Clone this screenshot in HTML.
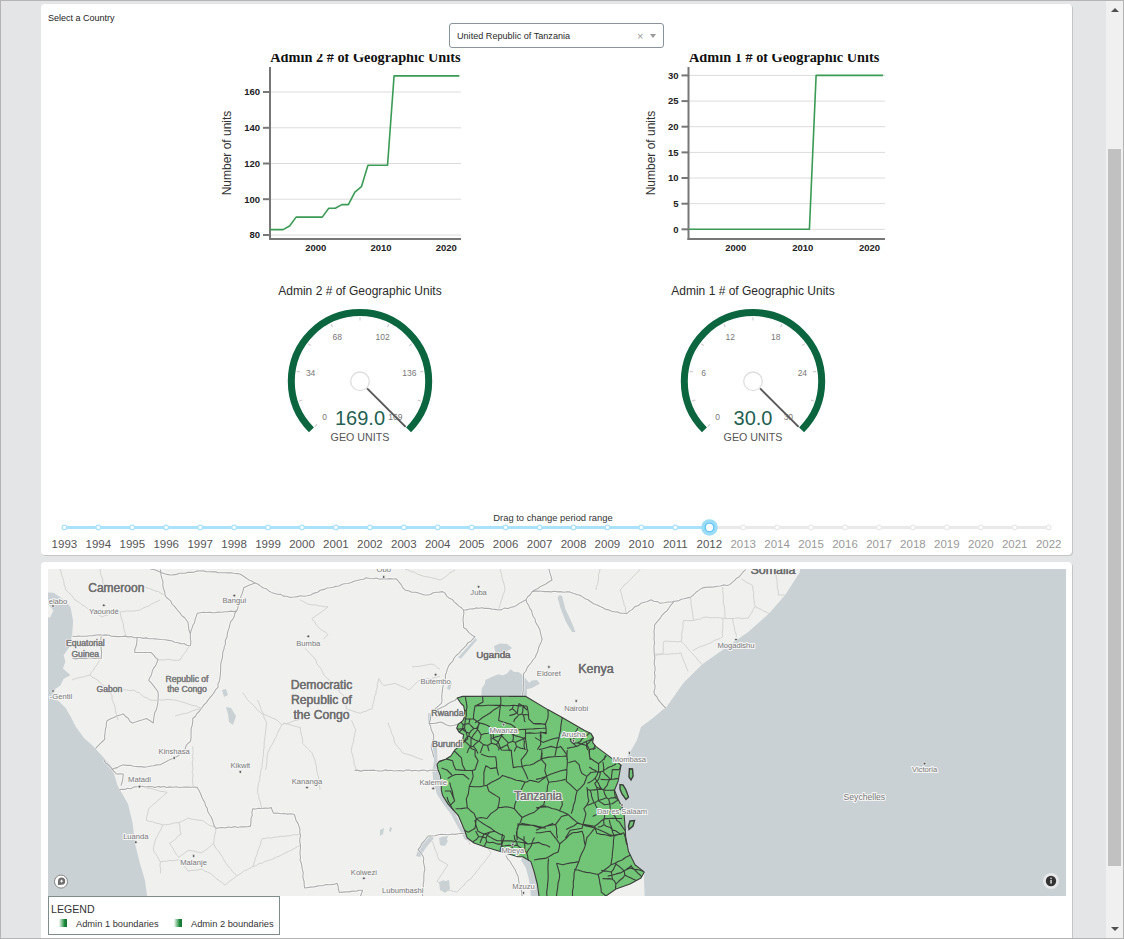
<!DOCTYPE html>
<html><head><meta charset="utf-8">
<style>
html,body{margin:0;padding:0;}
body{width:1124px;height:939px;overflow:hidden;position:relative;background:#e4e5e7;font-family:"Liberation Sans",sans-serif;}
.frame{position:absolute;z-index:10;pointer-events:none;left:0;top:0;width:1122px;height:937px;border:1px solid #b4b4b4;}
.card{position:absolute;background:#fff;border-radius:4px;box-shadow:1px 1px 0 #c4c5c7;}
.abs{position:absolute;white-space:nowrap;}
.sb{position:absolute;left:1106px;top:1px;width:17px;height:937px;background:#f0f0f0;}
svg text{font-family:"Liberation Sans",sans-serif;}
</style></head>
<body>
<div class="card" style="left:41px;top:4px;width:1031px;height:551px;"></div>
<div class="card" style="left:41px;top:562px;width:1031px;height:400px;"></div>
<div class="sb">
  <div style="position:absolute;left:2px;top:148px;width:13px;height:717px;background:#c1c1c1;"></div>
  <div style="position:absolute;left:4.5px;top:7px;width:0;height:0;border-left:4px solid transparent;border-right:4px solid transparent;border-bottom:4px solid #505050;"></div>
  <div style="position:absolute;left:4.5px;top:926px;width:0;height:0;border-left:4px solid transparent;border-right:4px solid transparent;border-top:4px solid #505050;"></div>
</div>

<div class="abs" style="left:48px;top:12.5px;font-size:9px;color:#222;">Select a Country</div>

<!-- select -->
<div class="abs" style="left:449px;top:23px;width:212.5px;height:23px;border:1px solid #88939a;border-radius:3px;background:#fff;"></div>
<div class="abs" style="left:457px;top:30.5px;font-size:9.1px;color:#2a2a2a;">United Republic of Tanzania</div>
<div class="abs" style="left:637px;top:30px;font-size:11px;color:#999;">×</div>
<div class="abs" style="left:650px;top:34px;width:0;height:0;border-left:3px solid transparent;border-right:3px solid transparent;border-top:4px solid #999;"></div>

<svg style="position:absolute;left:0;top:0" width="1124" height="939">
<clipPath id="c1"><rect x="210" y="54" width="300" height="400"/></clipPath>
<g clip-path="url(#c1)"><text x="270.3" y="61.7" style="font-family:Liberation Serif" font-weight="bold" font-size="14.3" fill="#111">Admin 2 # of Geographic Units</text></g>
<line x1="270" y1="92.0" x2="461" y2="92.0" stroke="#dcdcdc" stroke-width="1"/>
<line x1="263" y1="92.0" x2="270" y2="92.0" stroke="#777" stroke-width="2"/>
<text x="260" y="95.3" text-anchor="end" font-size="9.5" font-weight="bold" fill="#222">160</text>
<line x1="270" y1="127.8" x2="461" y2="127.8" stroke="#dcdcdc" stroke-width="1"/>
<line x1="263" y1="127.8" x2="270" y2="127.8" stroke="#777" stroke-width="2"/>
<text x="260" y="131.1" text-anchor="end" font-size="9.5" font-weight="bold" fill="#222">140</text>
<line x1="270" y1="163.5" x2="461" y2="163.5" stroke="#dcdcdc" stroke-width="1"/>
<line x1="263" y1="163.5" x2="270" y2="163.5" stroke="#777" stroke-width="2"/>
<text x="260" y="166.8" text-anchor="end" font-size="9.5" font-weight="bold" fill="#222">120</text>
<line x1="270" y1="199.2" x2="461" y2="199.2" stroke="#dcdcdc" stroke-width="1"/>
<line x1="263" y1="199.2" x2="270" y2="199.2" stroke="#777" stroke-width="2"/>
<text x="260" y="202.6" text-anchor="end" font-size="9.5" font-weight="bold" fill="#222">100</text>
<line x1="270" y1="235.0" x2="461" y2="235.0" stroke="#dcdcdc" stroke-width="1"/>
<line x1="263" y1="235.0" x2="270" y2="235.0" stroke="#777" stroke-width="2"/>
<text x="260" y="238.3" text-anchor="end" font-size="9.5" font-weight="bold" fill="#222">80</text>
<text x="315.7" y="251" text-anchor="middle" font-size="9.5" font-weight="bold" fill="#222">2000</text>
<text x="381.0" y="251" text-anchor="middle" font-size="9.5" font-weight="bold" fill="#222">2010</text>
<text x="446.3" y="251" text-anchor="middle" font-size="9.5" font-weight="bold" fill="#222">2020</text>
<line x1="270" y1="67" x2="270" y2="240" stroke="#777" stroke-width="2"/>
<line x1="269" y1="239" x2="461" y2="239" stroke="#777" stroke-width="2"/>
<polyline points="270.00,229.64 276.53,229.64 283.06,229.64 289.59,226.06 296.12,217.12 302.65,217.12 309.18,217.12 315.71,217.12 322.24,217.12 328.77,208.19 335.30,208.19 341.83,204.61 348.36,204.61 354.89,192.10 361.42,186.74 367.95,165.29 374.48,165.29 381.01,165.29 387.54,165.29 394.07,75.91 400.60,75.91 407.13,75.91 413.66,75.91 420.19,75.91 426.72,75.91 433.25,75.91 439.78,75.91 446.31,75.91 452.84,75.91 459.37,75.91" fill="none" stroke="#3b9b55" stroke-width="1.6" stroke-linejoin="round"/>
<text transform="translate(231,153) rotate(-90)" text-anchor="middle" font-size="12" fill="#333">Number of units</text>
<clipPath id="c2"><rect x="628.5" y="54" width="300" height="400"/></clipPath>
<g clip-path="url(#c2)"><text x="689" y="61.7" style="font-family:Liberation Serif" font-weight="bold" font-size="14.3" fill="#111">Admin 1 # of Geographic Units</text></g>
<line x1="688.5" y1="75.4" x2="885" y2="75.4" stroke="#dcdcdc" stroke-width="1"/>
<line x1="681.5" y1="75.4" x2="688.5" y2="75.4" stroke="#777" stroke-width="2"/>
<text x="678.5" y="78.7" text-anchor="end" font-size="9.5" font-weight="bold" fill="#222">30</text>
<line x1="688.5" y1="101.1" x2="885" y2="101.1" stroke="#dcdcdc" stroke-width="1"/>
<line x1="681.5" y1="101.1" x2="688.5" y2="101.1" stroke="#777" stroke-width="2"/>
<text x="678.5" y="104.4" text-anchor="end" font-size="9.5" font-weight="bold" fill="#222">25</text>
<line x1="688.5" y1="126.7" x2="885" y2="126.7" stroke="#dcdcdc" stroke-width="1"/>
<line x1="681.5" y1="126.7" x2="688.5" y2="126.7" stroke="#777" stroke-width="2"/>
<text x="678.5" y="130.0" text-anchor="end" font-size="9.5" font-weight="bold" fill="#222">20</text>
<line x1="688.5" y1="152.4" x2="885" y2="152.4" stroke="#dcdcdc" stroke-width="1"/>
<line x1="681.5" y1="152.4" x2="688.5" y2="152.4" stroke="#777" stroke-width="2"/>
<text x="678.5" y="155.7" text-anchor="end" font-size="9.5" font-weight="bold" fill="#222">15</text>
<line x1="688.5" y1="178.0" x2="885" y2="178.0" stroke="#dcdcdc" stroke-width="1"/>
<line x1="681.5" y1="178.0" x2="688.5" y2="178.0" stroke="#777" stroke-width="2"/>
<text x="678.5" y="181.3" text-anchor="end" font-size="9.5" font-weight="bold" fill="#222">10</text>
<line x1="688.5" y1="203.7" x2="885" y2="203.7" stroke="#dcdcdc" stroke-width="1"/>
<line x1="681.5" y1="203.7" x2="688.5" y2="203.7" stroke="#777" stroke-width="2"/>
<text x="678.5" y="207.0" text-anchor="end" font-size="9.5" font-weight="bold" fill="#222">5</text>
<line x1="688.5" y1="229.3" x2="885" y2="229.3" stroke="#dcdcdc" stroke-width="1"/>
<line x1="681.5" y1="229.3" x2="688.5" y2="229.3" stroke="#777" stroke-width="2"/>
<text x="678.5" y="232.6" text-anchor="end" font-size="9.5" font-weight="bold" fill="#222">0</text>
<text x="735.8" y="251" text-anchor="middle" font-size="9.5" font-weight="bold" fill="#222">2000</text>
<text x="802.7" y="251" text-anchor="middle" font-size="9.5" font-weight="bold" fill="#222">2010</text>
<text x="869.6" y="251" text-anchor="middle" font-size="9.5" font-weight="bold" fill="#222">2020</text>
<line x1="688.5" y1="67" x2="688.5" y2="240" stroke="#777" stroke-width="2"/>
<line x1="687.5" y1="239" x2="885" y2="239" stroke="#777" stroke-width="2"/>
<polyline points="689.00,229.30 695.69,229.30 702.38,229.30 709.07,229.30 715.76,229.30 722.45,229.30 729.14,229.30 735.83,229.30 742.52,229.30 749.21,229.30 755.90,229.30 762.59,229.30 769.28,229.30 775.97,229.30 782.66,229.30 789.35,229.30 796.04,229.30 802.73,229.30 809.42,229.30 816.11,75.40 822.80,75.40 829.49,75.40 836.18,75.40 842.87,75.40 849.56,75.40 856.25,75.40 862.94,75.40 869.63,75.40 876.32,75.40 883.01,75.40" fill="none" stroke="#3b9b55" stroke-width="1.6" stroke-linejoin="round"/>
<text transform="translate(655,153) rotate(-90)" text-anchor="middle" font-size="12" fill="#333">Number of units</text>
<text x="360" y="294.5" text-anchor="middle" font-size="12" fill="#2a2a2a">Admin 2 # of Geographic Units</text>
<path d="M311.42,429.88 A68.7,68.7 0 1 1 408.58,429.88" fill="none" stroke="#0b6640" stroke-width="7"/>
<line x1="317.08" y1="424.22" x2="314.75" y2="426.55" stroke="#cfcfcf" stroke-width="1.2"/>
<line x1="302.27" y1="400.06" x2="299.13" y2="401.08" stroke="#cfcfcf" stroke-width="1.2"/>
<line x1="300.05" y1="371.80" x2="296.79" y2="371.29" stroke="#cfcfcf" stroke-width="1.2"/>
<line x1="310.89" y1="345.62" x2="308.22" y2="343.68" stroke="#cfcfcf" stroke-width="1.2"/>
<line x1="332.44" y1="327.22" x2="330.94" y2="324.28" stroke="#cfcfcf" stroke-width="1.2"/>
<line x1="360.00" y1="320.60" x2="360.00" y2="317.30" stroke="#cfcfcf" stroke-width="1.2"/>
<line x1="387.56" y1="327.22" x2="389.06" y2="324.28" stroke="#cfcfcf" stroke-width="1.2"/>
<line x1="409.11" y1="345.62" x2="411.78" y2="343.68" stroke="#cfcfcf" stroke-width="1.2"/>
<line x1="419.95" y1="371.80" x2="423.21" y2="371.29" stroke="#cfcfcf" stroke-width="1.2"/>
<line x1="417.73" y1="400.06" x2="420.87" y2="401.08" stroke="#cfcfcf" stroke-width="1.2"/>
<line x1="402.92" y1="424.22" x2="405.25" y2="426.55" stroke="#cfcfcf" stroke-width="1.2"/>
<text x="324.64" y="419.66" text-anchor="middle" font-size="8.5" fill="#777">0</text>
<text x="310.62" y="376.48" text-anchor="middle" font-size="8.5" fill="#777">34</text>
<text x="337.30" y="339.75" text-anchor="middle" font-size="8.5" fill="#777">68</text>
<text x="382.70" y="339.75" text-anchor="middle" font-size="8.5" fill="#777">102</text>
<text x="409.38" y="376.48" text-anchor="middle" font-size="8.5" fill="#777">136</text>
<text x="395.36" y="419.66" text-anchor="middle" font-size="8.5" fill="#777">169</text>
<line x1="367.07" y1="388.37" x2="405.61" y2="426.91" stroke="#5a5a5a" stroke-width="2"/>
<circle cx="360" cy="381.3" r="9.3" fill="#fff" stroke="#dedede" stroke-width="1.3"/>
<text x="360" y="425" text-anchor="middle" font-size="20" fill="#245f52">169.0</text>
<text x="360" y="441" text-anchor="middle" font-size="10.7" fill="#555">GEO UNITS</text>
<text x="753" y="294.5" text-anchor="middle" font-size="12" fill="#2a2a2a">Admin 1 # of Geographic Units</text>
<path d="M704.42,429.88 A68.7,68.7 0 1 1 801.58,429.88" fill="none" stroke="#0b6640" stroke-width="7"/>
<line x1="710.08" y1="424.22" x2="707.75" y2="426.55" stroke="#cfcfcf" stroke-width="1.2"/>
<line x1="695.27" y1="400.06" x2="692.13" y2="401.08" stroke="#cfcfcf" stroke-width="1.2"/>
<line x1="693.05" y1="371.80" x2="689.79" y2="371.29" stroke="#cfcfcf" stroke-width="1.2"/>
<line x1="703.89" y1="345.62" x2="701.22" y2="343.68" stroke="#cfcfcf" stroke-width="1.2"/>
<line x1="725.44" y1="327.22" x2="723.94" y2="324.28" stroke="#cfcfcf" stroke-width="1.2"/>
<line x1="753.00" y1="320.60" x2="753.00" y2="317.30" stroke="#cfcfcf" stroke-width="1.2"/>
<line x1="780.56" y1="327.22" x2="782.06" y2="324.28" stroke="#cfcfcf" stroke-width="1.2"/>
<line x1="802.11" y1="345.62" x2="804.78" y2="343.68" stroke="#cfcfcf" stroke-width="1.2"/>
<line x1="812.95" y1="371.80" x2="816.21" y2="371.29" stroke="#cfcfcf" stroke-width="1.2"/>
<line x1="810.73" y1="400.06" x2="813.87" y2="401.08" stroke="#cfcfcf" stroke-width="1.2"/>
<line x1="795.92" y1="424.22" x2="798.25" y2="426.55" stroke="#cfcfcf" stroke-width="1.2"/>
<text x="717.64" y="419.66" text-anchor="middle" font-size="8.5" fill="#777">0</text>
<text x="703.62" y="376.48" text-anchor="middle" font-size="8.5" fill="#777">6</text>
<text x="730.30" y="339.75" text-anchor="middle" font-size="8.5" fill="#777">12</text>
<text x="775.70" y="339.75" text-anchor="middle" font-size="8.5" fill="#777">18</text>
<text x="802.38" y="376.48" text-anchor="middle" font-size="8.5" fill="#777">24</text>
<text x="788.36" y="419.66" text-anchor="middle" font-size="8.5" fill="#777">30</text>
<line x1="760.07" y1="388.37" x2="798.61" y2="426.91" stroke="#5a5a5a" stroke-width="2"/>
<circle cx="753" cy="381.3" r="9.3" fill="#fff" stroke="#dedede" stroke-width="1.3"/>
<text x="753" y="425" text-anchor="middle" font-size="20" fill="#245f52">30.0</text>
<text x="753" y="441" text-anchor="middle" font-size="10.7" fill="#555">GEO UNITS</text>
<text x="553" y="520.5" text-anchor="middle" font-size="9.4" fill="#333">Drag to change period range</text>
<rect x="64.4" y="526" width="984.3" height="3" rx="1.5" fill="#e9e9e9"/>
<rect x="64.4" y="526" width="644.9" height="3" fill="#abe2fb"/>
<circle cx="64.4" cy="527.4" r="2.3" fill="#fff" stroke="#abe2fb" stroke-width="1.2"/>
<text x="64.4" y="548" text-anchor="middle" font-size="11.5" fill="#555">1993</text>
<circle cx="98.3" cy="527.4" r="2.3" fill="#fff" stroke="#abe2fb" stroke-width="1.2"/>
<text x="98.3" y="548" text-anchor="middle" font-size="11.5" fill="#555">1994</text>
<circle cx="132.3" cy="527.4" r="2.3" fill="#fff" stroke="#abe2fb" stroke-width="1.2"/>
<text x="132.3" y="548" text-anchor="middle" font-size="11.5" fill="#555">1995</text>
<circle cx="166.2" cy="527.4" r="2.3" fill="#fff" stroke="#abe2fb" stroke-width="1.2"/>
<text x="166.2" y="548" text-anchor="middle" font-size="11.5" fill="#555">1996</text>
<circle cx="200.2" cy="527.4" r="2.3" fill="#fff" stroke="#abe2fb" stroke-width="1.2"/>
<text x="200.2" y="548" text-anchor="middle" font-size="11.5" fill="#555">1997</text>
<circle cx="234.1" cy="527.4" r="2.3" fill="#fff" stroke="#abe2fb" stroke-width="1.2"/>
<text x="234.1" y="548" text-anchor="middle" font-size="11.5" fill="#555">1998</text>
<circle cx="268.0" cy="527.4" r="2.3" fill="#fff" stroke="#abe2fb" stroke-width="1.2"/>
<text x="268.0" y="548" text-anchor="middle" font-size="11.5" fill="#555">1999</text>
<circle cx="302.0" cy="527.4" r="2.3" fill="#fff" stroke="#abe2fb" stroke-width="1.2"/>
<text x="302.0" y="548" text-anchor="middle" font-size="11.5" fill="#555">2000</text>
<circle cx="335.9" cy="527.4" r="2.3" fill="#fff" stroke="#abe2fb" stroke-width="1.2"/>
<text x="335.9" y="548" text-anchor="middle" font-size="11.5" fill="#555">2001</text>
<circle cx="369.9" cy="527.4" r="2.3" fill="#fff" stroke="#abe2fb" stroke-width="1.2"/>
<text x="369.9" y="548" text-anchor="middle" font-size="11.5" fill="#555">2002</text>
<circle cx="403.8" cy="527.4" r="2.3" fill="#fff" stroke="#abe2fb" stroke-width="1.2"/>
<text x="403.8" y="548" text-anchor="middle" font-size="11.5" fill="#555">2003</text>
<circle cx="437.7" cy="527.4" r="2.3" fill="#fff" stroke="#abe2fb" stroke-width="1.2"/>
<text x="437.7" y="548" text-anchor="middle" font-size="11.5" fill="#555">2004</text>
<circle cx="471.7" cy="527.4" r="2.3" fill="#fff" stroke="#abe2fb" stroke-width="1.2"/>
<text x="471.7" y="548" text-anchor="middle" font-size="11.5" fill="#555">2005</text>
<circle cx="505.6" cy="527.4" r="2.3" fill="#fff" stroke="#abe2fb" stroke-width="1.2"/>
<text x="505.6" y="548" text-anchor="middle" font-size="11.5" fill="#555">2006</text>
<circle cx="539.6" cy="527.4" r="2.3" fill="#fff" stroke="#abe2fb" stroke-width="1.2"/>
<text x="539.6" y="548" text-anchor="middle" font-size="11.5" fill="#555">2007</text>
<circle cx="573.5" cy="527.4" r="2.3" fill="#fff" stroke="#abe2fb" stroke-width="1.2"/>
<text x="573.5" y="548" text-anchor="middle" font-size="11.5" fill="#555">2008</text>
<circle cx="607.4" cy="527.4" r="2.3" fill="#fff" stroke="#abe2fb" stroke-width="1.2"/>
<text x="607.4" y="548" text-anchor="middle" font-size="11.5" fill="#555">2009</text>
<circle cx="641.4" cy="527.4" r="2.3" fill="#fff" stroke="#abe2fb" stroke-width="1.2"/>
<text x="641.4" y="548" text-anchor="middle" font-size="11.5" fill="#555">2010</text>
<circle cx="675.3" cy="527.4" r="2.3" fill="#fff" stroke="#abe2fb" stroke-width="1.2"/>
<text x="675.3" y="548" text-anchor="middle" font-size="11.5" fill="#555">2011</text>
<text x="709.3" y="548" text-anchor="middle" font-size="11.5" fill="#555">2012</text>
<circle cx="743.2" cy="527.4" r="2.3" fill="#fff" stroke="#e9e9e9" stroke-width="1.2"/>
<text x="743.2" y="548" text-anchor="middle" font-size="11.5" fill="#999">2013</text>
<circle cx="777.1" cy="527.4" r="2.3" fill="#fff" stroke="#e9e9e9" stroke-width="1.2"/>
<text x="777.1" y="548" text-anchor="middle" font-size="11.5" fill="#999">2014</text>
<circle cx="811.1" cy="527.4" r="2.3" fill="#fff" stroke="#e9e9e9" stroke-width="1.2"/>
<text x="811.1" y="548" text-anchor="middle" font-size="11.5" fill="#999">2015</text>
<circle cx="845.0" cy="527.4" r="2.3" fill="#fff" stroke="#e9e9e9" stroke-width="1.2"/>
<text x="845.0" y="548" text-anchor="middle" font-size="11.5" fill="#999">2016</text>
<circle cx="879.0" cy="527.4" r="2.3" fill="#fff" stroke="#e9e9e9" stroke-width="1.2"/>
<text x="879.0" y="548" text-anchor="middle" font-size="11.5" fill="#999">2017</text>
<circle cx="912.9" cy="527.4" r="2.3" fill="#fff" stroke="#e9e9e9" stroke-width="1.2"/>
<text x="912.9" y="548" text-anchor="middle" font-size="11.5" fill="#999">2018</text>
<circle cx="946.8" cy="527.4" r="2.3" fill="#fff" stroke="#e9e9e9" stroke-width="1.2"/>
<text x="946.8" y="548" text-anchor="middle" font-size="11.5" fill="#999">2019</text>
<circle cx="980.8" cy="527.4" r="2.3" fill="#fff" stroke="#e9e9e9" stroke-width="1.2"/>
<text x="980.8" y="548" text-anchor="middle" font-size="11.5" fill="#999">2020</text>
<circle cx="1014.7" cy="527.4" r="2.3" fill="#fff" stroke="#e9e9e9" stroke-width="1.2"/>
<text x="1014.7" y="548" text-anchor="middle" font-size="11.5" fill="#999">2021</text>
<circle cx="1048.7" cy="527.4" r="2.3" fill="#fff" stroke="#e9e9e9" stroke-width="1.2"/>
<text x="1048.7" y="548" text-anchor="middle" font-size="11.5" fill="#999">2022</text>
<circle cx="709.5" cy="527.4" r="6.5" fill="#fff" stroke="#9bdcf8" stroke-width="3.5"/>
<circle cx="709.5" cy="527.4" r="4.3" fill="#fff" stroke="#61c5f5" stroke-width="1.4"/>
</svg>

<svg style="position:absolute;left:0;top:0" width="1124" height="939">
<defs><clipPath id="mapclip"><rect x="48" y="569" width="1018" height="327"/></clipPath></defs>
<g clip-path="url(#mapclip)">
<rect x="48" y="569" width="1018" height="327" fill="#f0f0ee"/>
<polygon points="40.0,560.0 40.0,592.0 53.5,592.8 65.4,600.4 70.5,607.2 73.1,620.9 72.2,634.5 68.8,648.1 63.7,654.9 65.4,661.7 62.9,668.5 70.5,675.3 63.7,678.7 60.3,685.5 55.2,688.9 53.5,692.3 51.8,699.1 58.6,700.9 65.4,707.7 70.5,716.2 75.6,726.4 84.1,738.3 93.0,746.0 103.0,757.0 112.0,767.0 117.5,785.6 128.0,804.0 132.5,822.6 135.0,843.4 139.5,862.0 145.0,880.4 147.0,895.5 147.0,905.0 40.0,905.0" fill="#c9d1d4"/>
<polygon points="40,603 48,603.8 53.5,610.6 50.1,617.4 40,617" fill="#f0f0ee"/>
<polygon points="800.0,560.0 800.0,572.0 785.2,595.0 769.0,613.6 748.2,632.0 725.0,648.3 702.0,664.5 683.4,683.0 667.2,706.0 653.3,717.7 641.0,727.0 637.0,740.0 628.0,756.0 621.9,764.0 621.0,765.0 618.2,780.9 614.5,790.2 618.2,799.5 623.8,810.7 624.7,821.9 625.7,836.8 628.5,851.6 635.0,864.7 644.3,872.1 644.0,880.0 645.0,905.0 1070.0,905.0 1070.0,560.0" fill="#c9d1d4"/>
<polygon points="481.4,697.0 481.7,688.5 485.0,683.5 485.3,679.9 489.9,677.8 498.5,674.2 502.7,675.6 507.0,673.5 510.6,669.2 514.1,672.1 518.4,672.1 522.7,674.9 526.2,679.2 529.1,682.8 531.9,680.6 536.9,679.9 539.8,683.5 532.6,687.7 526.9,689.2 526.9,697.0" fill="#c9d1d4"/>
<polygon points="475.5,638.0 477.0,640.0 461.0,658.5 458.0,657.5" fill="#c9d1d4"/>
<polygon points="494.0,646.0 500.0,643.6 507.0,644.0 512.0,648.0 506.0,652.0 500.0,655.0 495.0,651.0" fill="#c9d1d4"/>
<polygon points="449.0,681.0 452.0,682.0 450.0,690.0 447.0,689.0" fill="#c9d1d4"/>
<polygon points="428.0,713.0 431.0,714.0 430.5,724.0 428.0,723.0" fill="#c9d1d4"/>
<polygon points="559.7,595.0 562.0,596.0 565.4,609.0 572.4,624.0 575.5,632.0 572.0,632.0 566.0,622.0 560.8,609.0 557.5,597.4" fill="#c9d1d4"/>
<polygon points="433.0,747.7 437.0,748.0 437.5,762.4 436.8,768.1 440.0,778.3 442.0,793.7 448.3,803.9 454.7,811.6 459.8,823.0 465.0,832.0 467.5,837.1 470.0,841.0 465.0,839.7 458.6,828.2 450.9,814.1 443.2,803.9 436.8,793.7 433.5,782.0 432.4,772.0 434.0,760.0" fill="#c9d1d4"/>
<polygon points="430.0,836.0 434.0,838.0 425.0,849.0 420.0,857.0 416.0,856.0 419.0,847.0" fill="#c9d1d4"/>
<polygon points="441.0,837.0 448.0,836.0 446.0,842.0 441.0,846.0" fill="#c9d1d4"/>
<polygon points="439.0,882.0 444.0,880.0 447.0,887.0 444.0,892.0 440.0,890.0" fill="#c9d1d4"/>
<polygon points="522.8,856.8 530.9,860.0 534.0,871.2 537.3,884.0 538.9,896.0 530.9,896.0 529.3,880.9 526.0,868.0 521.0,860.0" fill="#c9d1d4"/>
<polygon points="226.0,707.0 231.0,708.0 236.0,716.0 233.0,725.0 229.0,722.0 228.0,714.0" fill="#c9d1d4"/>
<polygon points="222.0,690.0 226.0,689.0 228.0,695.0 224.0,697.0" fill="#c9d1d4"/>
<polygon points="439.0,838.0 444.0,837.0 448.0,841.0 445.0,846.0 440.0,845.0" fill="#c9d1d4"/>
<polygon points="442.0,882.0 449.0,880.0 450.0,889.0 445.0,893.0 441.0,889.0" fill="#c9d1d4"/>
<polygon points="380.0,830.0 384.0,828.0 383.0,834.0 380.0,836.0" fill="#c9d1d4"/>
<polygon points="390.0,827.0 392.0,828.0 391.0,832.0 389.0,831.0" fill="#c9d1d4"/>
<polyline points="271.3,592.4 274.1,593.3 277.4,594.2 280.8,594.4 283.2,596.1 286.6,596.2 290.0,597.4 294.1,597.0 297.3,596.6 300.6,595.8 304.0,596.2 307.4,595.7 310.8,595.0 314.2,593.1 317.6,592.3 320.3,590.2 324.2,589.4 327.0,588.0 330.2,587.8 333.2,587.2 335.8,586.4 338.8,586.0 342.3,584.3 344.4,583.8 347.8,583.5 351.4,582.5 354.1,581.3 357.1,580.5 360.0,579.7 363.3,579.2 366.3,577.7 369.8,578.5 373.2,578.8 376.2,578.0 379.7,579.2 382.5,578.9 386.5,579.0 389.7,578.6 393.3,579.0 396.4,578.9 398.5,581.3 401.5,585.2 402.9,587.9 405.7,590.4 408.7,590.7 411.6,592.3 415.4,592.2 418.2,592.9 421.4,594.0 424.2,595.0 427.7,595.0 430.4,594.5 433.2,592.8 436.7,592.2 439.3,592.1 442.7,591.6 445.1,593.2 446.8,596.1 449.4,598.3 452.4,599.6 454.2,601.8 456.7,604.0 458.9,606.1 461.7,608.0 463.5,610.0 466.5,609.9 469.4,609.0 473.3,608.9 475.9,607.9 478.8,608.3 482.0,607.8 484.7,608.4 488.6,608.2 491.9,609.1 495.2,609.4 498.2,610.0 501.7,609.6 504.1,608.1 508.1,608.5 510.9,607.2 514.4,606.6 517.4,604.7 520.0,602.9 522.9,601.5 526.0,599.7" fill="none" stroke="#ffffff" stroke-width="2.6" stroke-opacity="0.6" stroke-linejoin="round"/>
<polyline points="271.3,592.4 268.4,590.7 266.2,588.7 263.3,588.0 260.3,585.9 258.2,584.3 255.1,583.1 251.8,584.2 249.6,585.0 246.3,586.4 243.6,587.8 243.1,590.6 242.3,593.2 240.8,596.6 240.6,599.3 238.9,601.8 238.4,604.8 237.8,608.4 236.6,610.9 234.8,613.4 234.2,616.6 232.8,619.1 230.6,621.8 229.7,624.8 229.3,627.6 228.0,630.9 227.3,633.9 227.1,636.7 225.2,640.7 225.5,643.9 224.2,646.9 224.0,649.1 222.7,652.5 222.6,656.1 222.1,658.8 221.2,661.8 220.7,664.6 220.7,668.0 220.6,670.9 220.3,674.8 219.9,678.2 219.4,681.0 217.9,684.3 218.1,687.2 215.7,689.6 214.2,692.4 211.9,695.5 210.1,697.4 207.7,700.6 205.9,703.1 203.7,705.0 201.9,708.0 199.6,711.0 196.9,713.6 195.5,716.2 192.7,718.5 192.8,721.2 192.2,725.5 191.2,728.1 191.1,731.7 191.0,735.0 191.1,737.7 190.4,741.6 187.9,743.5 186.1,745.7 185.2,749.0 182.2,750.9 180.5,753.0 178.8,755.5 175.5,757.2 172.7,758.4 169.2,759.9 166.0,761.8 163.6,763.1 160.3,764.8 156.6,764.9 153.7,765.8 150.9,766.0 147.7,766.8 144.1,767.1 140.6,766.6 137.2,766.6 133.6,766.2 130.2,765.3 126.8,765.4 123.3,764.8 119.9,765.9 117.4,767.6 115.1,768.1 111.7,769.4" fill="none" stroke="#ffffff" stroke-width="2.6" stroke-opacity="0.6" stroke-linejoin="round"/>
<polyline points="72.4,636.3 75.9,636.5 78.1,636.0 81.0,636.3 84.6,636.3 87.8,636.0 90.7,635.7 93.0,635.6 95.9,635.0 99.8,634.8 102.5,635.2 105.2,634.9 109.3,635.2 111.4,636.2 114.7,636.4 118.5,636.6 122.0,636.5 124.9,636.1 128.1,636.9 131.1,636.6 134.3,637.8 137.2,637.5 139.8,637.5 143.4,638.4 146.1,637.9 149.2,638.7 152.9,638.7 155.5,638.9 158.6,639.2 161.3,639.5 164.9,639.8 168.7,640.4 171.6,640.8 174.7,642.3 177.9,642.7 180.8,643.6 184.5,643.7 186.7,645.2 190.4,645.6 190.9,641.8 190.3,638.1 190.4,634.0 191.0,630.7 192.0,628.2 193.1,624.8 194.6,622.7 195.1,619.4 196.2,616.6 197.3,613.2 200.4,612.7 203.0,612.3 206.3,612.5 209.0,612.3 212.2,612.6 215.0,612.7 218.4,612.1 221.4,612.2 224.9,611.7 227.5,611.7 231.0,611.1 233.9,611.6 236.6,610.9" fill="none" stroke="#ffffff" stroke-width="2.6" stroke-opacity="0.6" stroke-linejoin="round"/>
<polyline points="160.3,569.3 160.8,572.2 161.1,575.9 162.2,579.4 163.0,581.7 162.8,584.9 163.4,588.6 164.8,592.0 164.9,594.7 166.5,597.5 168.5,599.2 170.9,601.2 172.1,604.4 174.3,606.1 176.5,608.8 177.8,610.7 180.2,613.2 181.9,615.7 184.7,617.7 186.1,619.7 188.0,622.5 188.5,626.5 189.1,630.6 190.4,634.0" fill="none" stroke="#ffffff" stroke-width="2.6" stroke-opacity="0.6" stroke-linejoin="round"/>
<polyline points="150.0,569.0 153.8,569.5 157.2,570.8 160.3,572.3 163.1,573.2 166.9,574.4 170.0,575.0 172.7,574.9 176.6,574.4 179.0,573.3 182.0,573.2 185.3,573.2 188.1,572.2 191.2,572.4 193.6,572.3 197.2,570.9 200.0,571.0 203.6,570.8 206.0,571.7 209.3,571.8 212.5,571.9 215.2,571.8 217.9,572.6 221.8,572.7 224.9,572.7 227.4,572.9 231.2,572.8 233.9,573.2 237.2,573.6 240.0,574.0 242.8,575.7 246.1,578.0 248.9,579.9 251.6,581.0 255.1,583.1" fill="none" stroke="#ffffff" stroke-width="2.6" stroke-opacity="0.6" stroke-linejoin="round"/>
<polyline points="101.3,636.3 100.8,639.0 101.6,642.9 100.9,645.4 101.2,649.2 101.7,652.3 101.4,654.7 101.3,658.3 98.0,657.9 94.9,658.4 91.3,658.0 88.8,657.7 85.6,658.8 82.6,658.2 78.9,658.4 75.8,658.9 72.4,658.3" fill="none" stroke="#ffffff" stroke-width="2.6" stroke-opacity="0.6" stroke-linejoin="round"/>
<polyline points="137.2,637.5 136.9,640.3 136.7,643.5 135.9,646.8 134.7,649.8 134.8,652.5 138.2,652.5 141.3,652.5 144.2,652.5 147.2,652.5 151.0,652.5 153.5,654.8 155.7,657.7 158.0,659.5 157.1,662.0 155.7,665.6 153.5,668.2 152.4,670.9 151.4,674.9 149.8,677.8 148.7,680.3 151.3,682.8 153.8,686.2 156.2,689.3 158.0,691.9 158.3,695.8 158.0,700.0 157.7,703.8 157.1,706.5 156.3,709.8 154.8,712.6 154.1,716.1 153.6,719.7 153.3,723.0 150.1,720.8 146.4,718.5 142.8,719.8 139.2,720.7 136.3,721.8 132.5,723.0 129.8,721.2 128.2,718.3 125.4,716.2 123.3,713.9 120.2,714.9 116.2,716.3 113.9,717.6 110.2,719.1 107.0,720.8 106.3,723.5 106.2,726.6 105.3,729.6 105.1,733.1 104.6,735.6 104.8,739.3 102.4,741.5 100.4,743.4 97.7,746.2 95.5,748.6" fill="none" stroke="#ffffff" stroke-width="2.6" stroke-opacity="0.6" stroke-linejoin="round"/>
<polyline points="104.0,760.0 105.5,762.9 107.8,764.2 110.1,766.6 112.3,769.1 113.8,771.1 116.3,774.0 120.1,773.7 123.3,774.0 122.9,777.8 122.3,781.5 121.0,785.6" fill="none" stroke="#ffffff" stroke-width="2.6" stroke-opacity="0.6" stroke-linejoin="round"/>
<polyline points="118.6,790.2 121.3,789.4 124.9,789.4 127.4,788.2 130.8,788.8 133.6,787.1 136.0,786.7 139.5,786.7 142.1,786.2 145.0,787.0 149.1,786.5 152.2,786.8 155.1,787.4 158.3,786.4 160.6,787.1 164.4,786.5 166.6,787.5 169.5,786.9 172.8,787.3 176.5,786.8 179.3,787.5 182.5,787.3 185.6,787.1 188.1,787.0 191.6,787.3 194.0,787.0 197.3,787.4 199.1,790.8 200.6,793.8 201.9,797.2 203.1,799.6 204.7,802.3 205.7,806.0 207.2,808.1 207.9,811.8 209.7,814.7 211.2,817.0 212.5,820.2 213.1,822.6 214.0,825.4 215.8,828.4 219.5,827.7 222.2,827.5 224.8,828.0 228.1,827.0 231.2,827.5 234.8,826.6 237.6,827.5 240.7,826.8 244.1,826.9 247.5,826.7 250.5,826.1 251.0,822.2 251.0,818.6 252.3,815.2 251.8,812.7 252.8,808.7 255.5,809.0 258.5,808.3 261.7,808.5 265.3,808.1 268.5,808.2 271.3,807.6 272.3,810.6 273.6,813.3 277.0,813.0 280.9,813.8 284.4,813.5 287.5,814.1 291.2,813.8 294.4,814.5 295.3,817.5 296.1,820.6 298.0,823.4 299.1,826.6 300.0,829.5 299.7,832.4 300.6,835.4 299.9,838.2 299.7,841.3 300.5,845.1 300.4,848.4 300.1,851.4 300.0,853.9 300.5,857.5 300.0,860.1 301.3,863.2 301.9,866.2 302.3,869.4 303.3,873.0 302.8,876.1 303.1,878.2 304.1,881.5 304.2,885.0 304.6,887.9 307.1,887.8 310.5,887.1 313.7,887.0 317.2,886.1 319.5,885.7 323.1,885.6 326.5,884.5 329.6,884.8 333.8,884.4 337.0,883.3 338.3,886.8 338.4,889.0 339.3,892.5 342.4,892.1 346.0,891.9 349.1,891.9 352.3,891.1 356.3,891.2 358.9,890.2 362.5,890.2 361.7,893.0 360.1,897.0" fill="none" stroke="#ffffff" stroke-width="2.6" stroke-opacity="0.6" stroke-linejoin="round"/>
<polyline points="428.4,835.9 425.9,838.7 424.3,841.0 421.6,843.8 420.4,846.9 418.0,849.7 420.9,852.9 422.6,855.5 423.8,858.4 423.4,861.9 424.2,865.7 424.9,869.4 424.1,872.5 423.9,875.3 423.8,879.0 423.8,881.4 423.1,884.6 423.5,888.0 423.6,891.2 422.6,893.5 422.6,897.0" fill="none" stroke="#ffffff" stroke-width="2.6" stroke-opacity="0.6" stroke-linejoin="round"/>
<polyline points="428.4,835.9 432.0,836.0 435.1,835.7 438.4,834.8 441.3,834.2 445.0,834.5 448.5,834.8 452.1,834.0 455.1,834.4 458.6,833.8 461.5,833.4 464.9,833.2" fill="none" stroke="#ffffff" stroke-width="2.6" stroke-opacity="0.6" stroke-linejoin="round"/>
<polyline points="354.6,770.5 357.2,770.1 360.9,771.1 363.7,770.4 366.5,770.4 370.1,770.4 373.3,770.1 375.6,770.5 378.7,770.9 382.3,771.0 385.0,769.9 388.0,770.6 391.0,770.2 394.3,771.0 396.6,770.7 399.9,770.5 403.6,771.1 406.3,770.1 409.7,770.1 412.0,770.9 415.0,770.2 418.8,771.0 421.1,770.4 424.1,770.1 427.0,771.1 429.9,770.2 433.0,770.0 436.5,770.8 439.9,770.7 442.5,770.5" fill="none" stroke="#ffffff" stroke-width="2.6" stroke-opacity="0.6" stroke-linejoin="round"/>
<polyline points="463.5,610.0 463.9,612.9 463.2,617.6 463.0,620.2 463.5,623.7 463.5,627.5 466.4,629.3 468.9,632.6 471.7,634.9 475.0,636.7 472.3,639.6 470.6,641.5 467.6,643.1 466.1,645.6 463.1,648.6 461.6,650.0 459.4,652.9 456.5,655.2 454.5,657.5 452.7,661.3 450.7,663.1 448.7,665.9 447.3,669.1 446.4,672.7 445.3,674.9 445.5,678.9 444.8,681.1 443.3,685.1 442.7,687.6 442.4,691.0 442.0,693.3 441.7,697.4 442.0,700.3 441.4,703.4 438.8,705.7 436.3,707.9 434.2,709.8 431.3,712.4 430.7,716.7 430.3,719.5 429.1,723.6 430.8,726.8 431.0,728.9 432.1,731.5 433.6,734.8 433.6,738.0 432.9,741.0 431.3,745.3 431.3,748.2 432.4,751.8 433.1,754.2 433.6,757.1" fill="none" stroke="#ffffff" stroke-width="2.6" stroke-opacity="0.6" stroke-linejoin="round"/>
<polyline points="431.3,712.4 434.4,710.6 436.8,709.8 439.1,708.7 442.0,707.3 445.0,706.0 447.9,703.8 451.0,702.1 454.8,700.5 457.3,698.0" fill="none" stroke="#ffffff" stroke-width="2.6" stroke-opacity="0.6" stroke-linejoin="round"/>
<polyline points="429.1,723.6 433.2,723.5 436.1,723.1 440.0,722.0 443.1,722.9 446.7,724.9 450.0,726.0 454.0,725.2 458.3,724.1" fill="none" stroke="#ffffff" stroke-width="2.6" stroke-opacity="0.6" stroke-linejoin="round"/>
<polyline points="526.0,599.7 527.0,603.0 528.5,605.1 529.8,608.4 531.6,610.7 532.2,613.5 533.0,616.0 535.2,619.2 535.5,622.0 537.2,624.9 538.4,626.7 539.8,629.8 540.6,633.3 541.3,636.4 542.1,639.0 541.2,641.9 539.6,645.2 538.5,648.1 537.7,651.8 536.5,654.0 535.2,657.5 532.9,660.0 531.5,662.5 528.9,665.4 527.2,667.7 525.6,671.5 523.6,673.7 523.5,677.3 523.7,680.7 523.6,683.6 523.2,686.5 523.3,690.1 522.6,694.1 522.5,696.9" fill="none" stroke="#ffffff" stroke-width="2.6" stroke-opacity="0.6" stroke-linejoin="round"/>
<polyline points="526.0,599.7 527.7,596.7 530.4,594.5 532.0,591.7 534.7,591.1 538.2,591.1 541.9,591.3 544.5,591.6 547.9,591.6 551.2,591.9 554.2,591.2 558.0,591.9 560.1,591.6 564.1,592.3 567.0,591.7 569.6,591.9 573.1,593.3 576.7,594.6 579.3,595.0 582.1,596.6 585.3,598.8 587.9,599.8 590.7,601.8 593.6,603.8 597.2,605.0 600.1,606.6 602.5,607.5 605.9,609.4 608.8,609.9 611.7,611.3 615.3,612.0 617.7,611.9 620.5,613.2 623.3,613.2 626.7,613.6 629.5,611.1 632.4,609.4 634.8,606.6 638.5,605.5 640.9,603.3 644.4,602.2 647.4,601.5 651.0,599.7 653.8,601.3 657.7,601.6 660.3,603.2 664.7,602.7 667.7,602.0 671.9,602.0 674.4,601.2 677.9,600.9 681.5,599.2 684.1,598.8 686.9,597.9 690.4,597.4 693.0,595.3 696.0,592.3 698.8,590.4 702.0,588.1 705.2,587.4 708.4,587.0 711.4,587.1 713.9,586.9 717.3,586.3 720.6,586.0 723.5,584.9 727.0,585.5 729.7,584.7 732.0,582.6 734.1,580.9 736.9,577.9 739.3,576.7 741.1,574.5 743.6,571.4 745.9,569.6" fill="none" stroke="#ffffff" stroke-width="2.6" stroke-opacity="0.6" stroke-linejoin="round"/>
<polyline points="532.0,591.7 535.1,589.8 538.0,588.5 540.1,586.7 543.8,585.0 546.3,583.8 549.1,581.7 552.0,580.0 551.1,576.7 549.6,572.2 549.0,569.0" fill="none" stroke="#ffffff" stroke-width="2.6" stroke-opacity="0.6" stroke-linejoin="round"/>
<polyline points="674.2,600.9 672.5,603.4 670.0,606.2 668.8,608.2 666.9,610.9 664.6,612.7 661.8,615.6 660.7,617.6 658.4,620.3 656.2,622.8 654.5,625.0 654.6,627.9 654.0,631.1 654.3,634.3 654.1,637.0 654.1,640.0 654.6,642.7 654.0,646.1 654.1,649.2 654.1,651.7 654.5,655.7 654.9,658.3 654.4,660.7 654.2,664.1 655.0,666.8 655.0,670.3 654.4,673.1 655.1,676.0 654.6,679.4 654.1,682.1 655.1,685.8 654.8,688.9 654.0,691.7 654.5,694.5 656.7,696.5 658.3,699.7 660.0,701.8 661.8,704.0 663.8,706.1 666.0,708.4" fill="none" stroke="#ffffff" stroke-width="2.6" stroke-opacity="0.6" stroke-linejoin="round"/>
<polyline points="505.9,855.5 507.7,858.9 510.1,861.5 511.8,864.5 513.6,867.3 515.3,870.0 516.5,873.2 518.0,876.0 518.5,878.5 518.9,882.2 519.5,885.3 520.5,888.5 521.6,891.3 521.6,893.5 522.4,897.0" fill="none" stroke="#ffffff" stroke-width="2.6" stroke-opacity="0.6" stroke-linejoin="round"/>
<polyline points="547.7,896.0 550.8,895.5 554.4,894.1 556.5,894.3 560.0,893.0 563.6,893.3 566.9,893.2 570.0,894.1 573.4,893.8 576.2,894.6 580.4,894.4 582.7,894.6 586.6,895.4" fill="none" stroke="#ffffff" stroke-width="2.6" stroke-opacity="0.6" stroke-linejoin="round"/>
<polyline points="271.3,592.4 274.1,593.3 277.4,594.2 280.8,594.4 283.2,596.1 286.6,596.2 290.0,597.4 294.1,597.0 297.3,596.6 300.6,595.8 304.0,596.2 307.4,595.7 310.8,595.0 314.2,593.1 317.6,592.3 320.3,590.2 324.2,589.4 327.0,588.0 330.2,587.8 333.2,587.2 335.8,586.4 338.8,586.0 342.3,584.3 344.4,583.8 347.8,583.5 351.4,582.5 354.1,581.3 357.1,580.5 360.0,579.7 363.3,579.2 366.3,577.7 369.8,578.5 373.2,578.8 376.2,578.0 379.7,579.2 382.5,578.9 386.5,579.0 389.7,578.6 393.3,579.0 396.4,578.9 398.5,581.3 401.5,585.2 402.9,587.9 405.7,590.4 408.7,590.7 411.6,592.3 415.4,592.2 418.2,592.9 421.4,594.0 424.2,595.0 427.7,595.0 430.4,594.5 433.2,592.8 436.7,592.2 439.3,592.1 442.7,591.6 445.1,593.2 446.8,596.1 449.4,598.3 452.4,599.6 454.2,601.8 456.7,604.0 458.9,606.1 461.7,608.0 463.5,610.0 466.5,609.9 469.4,609.0 473.3,608.9 475.9,607.9 478.8,608.3 482.0,607.8 484.7,608.4 488.6,608.2 491.9,609.1 495.2,609.4 498.2,610.0 501.7,609.6 504.1,608.1 508.1,608.5 510.9,607.2 514.4,606.6 517.4,604.7 520.0,602.9 522.9,601.5 526.0,599.7" fill="none" stroke="#acacac" stroke-width="1.1" stroke-linejoin="round"/>
<polyline points="271.3,592.4 268.4,590.7 266.2,588.7 263.3,588.0 260.3,585.9 258.2,584.3 255.1,583.1 251.8,584.2 249.6,585.0 246.3,586.4 243.6,587.8 243.1,590.6 242.3,593.2 240.8,596.6 240.6,599.3 238.9,601.8 238.4,604.8 237.8,608.4 236.6,610.9 234.8,613.4 234.2,616.6 232.8,619.1 230.6,621.8 229.7,624.8 229.3,627.6 228.0,630.9 227.3,633.9 227.1,636.7 225.2,640.7 225.5,643.9 224.2,646.9 224.0,649.1 222.7,652.5 222.6,656.1 222.1,658.8 221.2,661.8 220.7,664.6 220.7,668.0 220.6,670.9 220.3,674.8 219.9,678.2 219.4,681.0 217.9,684.3 218.1,687.2 215.7,689.6 214.2,692.4 211.9,695.5 210.1,697.4 207.7,700.6 205.9,703.1 203.7,705.0 201.9,708.0 199.6,711.0 196.9,713.6 195.5,716.2 192.7,718.5 192.8,721.2 192.2,725.5 191.2,728.1 191.1,731.7 191.0,735.0 191.1,737.7 190.4,741.6 187.9,743.5 186.1,745.7 185.2,749.0 182.2,750.9 180.5,753.0 178.8,755.5 175.5,757.2 172.7,758.4 169.2,759.9 166.0,761.8 163.6,763.1 160.3,764.8 156.6,764.9 153.7,765.8 150.9,766.0 147.7,766.8 144.1,767.1 140.6,766.6 137.2,766.6 133.6,766.2 130.2,765.3 126.8,765.4 123.3,764.8 119.9,765.9 117.4,767.6 115.1,768.1 111.7,769.4" fill="none" stroke="#acacac" stroke-width="1.1" stroke-linejoin="round"/>
<polyline points="72.4,636.3 75.9,636.5 78.1,636.0 81.0,636.3 84.6,636.3 87.8,636.0 90.7,635.7 93.0,635.6 95.9,635.0 99.8,634.8 102.5,635.2 105.2,634.9 109.3,635.2 111.4,636.2 114.7,636.4 118.5,636.6 122.0,636.5 124.9,636.1 128.1,636.9 131.1,636.6 134.3,637.8 137.2,637.5 139.8,637.5 143.4,638.4 146.1,637.9 149.2,638.7 152.9,638.7 155.5,638.9 158.6,639.2 161.3,639.5 164.9,639.8 168.7,640.4 171.6,640.8 174.7,642.3 177.9,642.7 180.8,643.6 184.5,643.7 186.7,645.2 190.4,645.6 190.9,641.8 190.3,638.1 190.4,634.0 191.0,630.7 192.0,628.2 193.1,624.8 194.6,622.7 195.1,619.4 196.2,616.6 197.3,613.2 200.4,612.7 203.0,612.3 206.3,612.5 209.0,612.3 212.2,612.6 215.0,612.7 218.4,612.1 221.4,612.2 224.9,611.7 227.5,611.7 231.0,611.1 233.9,611.6 236.6,610.9" fill="none" stroke="#acacac" stroke-width="1.1" stroke-linejoin="round"/>
<polyline points="160.3,569.3 160.8,572.2 161.1,575.9 162.2,579.4 163.0,581.7 162.8,584.9 163.4,588.6 164.8,592.0 164.9,594.7 166.5,597.5 168.5,599.2 170.9,601.2 172.1,604.4 174.3,606.1 176.5,608.8 177.8,610.7 180.2,613.2 181.9,615.7 184.7,617.7 186.1,619.7 188.0,622.5 188.5,626.5 189.1,630.6 190.4,634.0" fill="none" stroke="#acacac" stroke-width="1.1" stroke-linejoin="round"/>
<polyline points="150.0,569.0 153.8,569.5 157.2,570.8 160.3,572.3 163.1,573.2 166.9,574.4 170.0,575.0 172.7,574.9 176.6,574.4 179.0,573.3 182.0,573.2 185.3,573.2 188.1,572.2 191.2,572.4 193.6,572.3 197.2,570.9 200.0,571.0 203.6,570.8 206.0,571.7 209.3,571.8 212.5,571.9 215.2,571.8 217.9,572.6 221.8,572.7 224.9,572.7 227.4,572.9 231.2,572.8 233.9,573.2 237.2,573.6 240.0,574.0 242.8,575.7 246.1,578.0 248.9,579.9 251.6,581.0 255.1,583.1" fill="none" stroke="#acacac" stroke-width="1.1" stroke-linejoin="round"/>
<polyline points="101.3,636.3 100.8,639.0 101.6,642.9 100.9,645.4 101.2,649.2 101.7,652.3 101.4,654.7 101.3,658.3 98.0,657.9 94.9,658.4 91.3,658.0 88.8,657.7 85.6,658.8 82.6,658.2 78.9,658.4 75.8,658.9 72.4,658.3" fill="none" stroke="#acacac" stroke-width="1.1" stroke-linejoin="round"/>
<polyline points="137.2,637.5 136.9,640.3 136.7,643.5 135.9,646.8 134.7,649.8 134.8,652.5 138.2,652.5 141.3,652.5 144.2,652.5 147.2,652.5 151.0,652.5 153.5,654.8 155.7,657.7 158.0,659.5 157.1,662.0 155.7,665.6 153.5,668.2 152.4,670.9 151.4,674.9 149.8,677.8 148.7,680.3 151.3,682.8 153.8,686.2 156.2,689.3 158.0,691.9 158.3,695.8 158.0,700.0 157.7,703.8 157.1,706.5 156.3,709.8 154.8,712.6 154.1,716.1 153.6,719.7 153.3,723.0 150.1,720.8 146.4,718.5 142.8,719.8 139.2,720.7 136.3,721.8 132.5,723.0 129.8,721.2 128.2,718.3 125.4,716.2 123.3,713.9 120.2,714.9 116.2,716.3 113.9,717.6 110.2,719.1 107.0,720.8 106.3,723.5 106.2,726.6 105.3,729.6 105.1,733.1 104.6,735.6 104.8,739.3 102.4,741.5 100.4,743.4 97.7,746.2 95.5,748.6" fill="none" stroke="#acacac" stroke-width="1.1" stroke-linejoin="round"/>
<polyline points="104.0,760.0 105.5,762.9 107.8,764.2 110.1,766.6 112.3,769.1 113.8,771.1 116.3,774.0 120.1,773.7 123.3,774.0 122.9,777.8 122.3,781.5 121.0,785.6" fill="none" stroke="#acacac" stroke-width="1.1" stroke-linejoin="round"/>
<polyline points="118.6,790.2 121.3,789.4 124.9,789.4 127.4,788.2 130.8,788.8 133.6,787.1 136.0,786.7 139.5,786.7 142.1,786.2 145.0,787.0 149.1,786.5 152.2,786.8 155.1,787.4 158.3,786.4 160.6,787.1 164.4,786.5 166.6,787.5 169.5,786.9 172.8,787.3 176.5,786.8 179.3,787.5 182.5,787.3 185.6,787.1 188.1,787.0 191.6,787.3 194.0,787.0 197.3,787.4 199.1,790.8 200.6,793.8 201.9,797.2 203.1,799.6 204.7,802.3 205.7,806.0 207.2,808.1 207.9,811.8 209.7,814.7 211.2,817.0 212.5,820.2 213.1,822.6 214.0,825.4 215.8,828.4 219.5,827.7 222.2,827.5 224.8,828.0 228.1,827.0 231.2,827.5 234.8,826.6 237.6,827.5 240.7,826.8 244.1,826.9 247.5,826.7 250.5,826.1 251.0,822.2 251.0,818.6 252.3,815.2 251.8,812.7 252.8,808.7 255.5,809.0 258.5,808.3 261.7,808.5 265.3,808.1 268.5,808.2 271.3,807.6 272.3,810.6 273.6,813.3 277.0,813.0 280.9,813.8 284.4,813.5 287.5,814.1 291.2,813.8 294.4,814.5 295.3,817.5 296.1,820.6 298.0,823.4 299.1,826.6 300.0,829.5 299.7,832.4 300.6,835.4 299.9,838.2 299.7,841.3 300.5,845.1 300.4,848.4 300.1,851.4 300.0,853.9 300.5,857.5 300.0,860.1 301.3,863.2 301.9,866.2 302.3,869.4 303.3,873.0 302.8,876.1 303.1,878.2 304.1,881.5 304.2,885.0 304.6,887.9 307.1,887.8 310.5,887.1 313.7,887.0 317.2,886.1 319.5,885.7 323.1,885.6 326.5,884.5 329.6,884.8 333.8,884.4 337.0,883.3 338.3,886.8 338.4,889.0 339.3,892.5 342.4,892.1 346.0,891.9 349.1,891.9 352.3,891.1 356.3,891.2 358.9,890.2 362.5,890.2 361.7,893.0 360.1,897.0" fill="none" stroke="#acacac" stroke-width="1.1" stroke-linejoin="round"/>
<polyline points="428.4,835.9 425.9,838.7 424.3,841.0 421.6,843.8 420.4,846.9 418.0,849.7 420.9,852.9 422.6,855.5 423.8,858.4 423.4,861.9 424.2,865.7 424.9,869.4 424.1,872.5 423.9,875.3 423.8,879.0 423.8,881.4 423.1,884.6 423.5,888.0 423.6,891.2 422.6,893.5 422.6,897.0" fill="none" stroke="#acacac" stroke-width="1.1" stroke-linejoin="round"/>
<polyline points="428.4,835.9 432.0,836.0 435.1,835.7 438.4,834.8 441.3,834.2 445.0,834.5 448.5,834.8 452.1,834.0 455.1,834.4 458.6,833.8 461.5,833.4 464.9,833.2" fill="none" stroke="#acacac" stroke-width="1.1" stroke-linejoin="round"/>
<polyline points="354.6,770.5 357.2,770.1 360.9,771.1 363.7,770.4 366.5,770.4 370.1,770.4 373.3,770.1 375.6,770.5 378.7,770.9 382.3,771.0 385.0,769.9 388.0,770.6 391.0,770.2 394.3,771.0 396.6,770.7 399.9,770.5 403.6,771.1 406.3,770.1 409.7,770.1 412.0,770.9 415.0,770.2 418.8,771.0 421.1,770.4 424.1,770.1 427.0,771.1 429.9,770.2 433.0,770.0 436.5,770.8 439.9,770.7 442.5,770.5" fill="none" stroke="#acacac" stroke-width="1.1" stroke-linejoin="round"/>
<polyline points="463.5,610.0 463.9,612.9 463.2,617.6 463.0,620.2 463.5,623.7 463.5,627.5 466.4,629.3 468.9,632.6 471.7,634.9 475.0,636.7 472.3,639.6 470.6,641.5 467.6,643.1 466.1,645.6 463.1,648.6 461.6,650.0 459.4,652.9 456.5,655.2 454.5,657.5 452.7,661.3 450.7,663.1 448.7,665.9 447.3,669.1 446.4,672.7 445.3,674.9 445.5,678.9 444.8,681.1 443.3,685.1 442.7,687.6 442.4,691.0 442.0,693.3 441.7,697.4 442.0,700.3 441.4,703.4 438.8,705.7 436.3,707.9 434.2,709.8 431.3,712.4 430.7,716.7 430.3,719.5 429.1,723.6 430.8,726.8 431.0,728.9 432.1,731.5 433.6,734.8 433.6,738.0 432.9,741.0 431.3,745.3 431.3,748.2 432.4,751.8 433.1,754.2 433.6,757.1" fill="none" stroke="#acacac" stroke-width="1.1" stroke-linejoin="round"/>
<polyline points="431.3,712.4 434.4,710.6 436.8,709.8 439.1,708.7 442.0,707.3 445.0,706.0 447.9,703.8 451.0,702.1 454.8,700.5 457.3,698.0" fill="none" stroke="#acacac" stroke-width="1.1" stroke-linejoin="round"/>
<polyline points="429.1,723.6 433.2,723.5 436.1,723.1 440.0,722.0 443.1,722.9 446.7,724.9 450.0,726.0 454.0,725.2 458.3,724.1" fill="none" stroke="#acacac" stroke-width="1.1" stroke-linejoin="round"/>
<polyline points="526.0,599.7 527.0,603.0 528.5,605.1 529.8,608.4 531.6,610.7 532.2,613.5 533.0,616.0 535.2,619.2 535.5,622.0 537.2,624.9 538.4,626.7 539.8,629.8 540.6,633.3 541.3,636.4 542.1,639.0 541.2,641.9 539.6,645.2 538.5,648.1 537.7,651.8 536.5,654.0 535.2,657.5 532.9,660.0 531.5,662.5 528.9,665.4 527.2,667.7 525.6,671.5 523.6,673.7 523.5,677.3 523.7,680.7 523.6,683.6 523.2,686.5 523.3,690.1 522.6,694.1 522.5,696.9" fill="none" stroke="#acacac" stroke-width="1.1" stroke-linejoin="round"/>
<polyline points="526.0,599.7 527.7,596.7 530.4,594.5 532.0,591.7 534.7,591.1 538.2,591.1 541.9,591.3 544.5,591.6 547.9,591.6 551.2,591.9 554.2,591.2 558.0,591.9 560.1,591.6 564.1,592.3 567.0,591.7 569.6,591.9 573.1,593.3 576.7,594.6 579.3,595.0 582.1,596.6 585.3,598.8 587.9,599.8 590.7,601.8 593.6,603.8 597.2,605.0 600.1,606.6 602.5,607.5 605.9,609.4 608.8,609.9 611.7,611.3 615.3,612.0 617.7,611.9 620.5,613.2 623.3,613.2 626.7,613.6 629.5,611.1 632.4,609.4 634.8,606.6 638.5,605.5 640.9,603.3 644.4,602.2 647.4,601.5 651.0,599.7 653.8,601.3 657.7,601.6 660.3,603.2 664.7,602.7 667.7,602.0 671.9,602.0 674.4,601.2 677.9,600.9 681.5,599.2 684.1,598.8 686.9,597.9 690.4,597.4 693.0,595.3 696.0,592.3 698.8,590.4 702.0,588.1 705.2,587.4 708.4,587.0 711.4,587.1 713.9,586.9 717.3,586.3 720.6,586.0 723.5,584.9 727.0,585.5 729.7,584.7 732.0,582.6 734.1,580.9 736.9,577.9 739.3,576.7 741.1,574.5 743.6,571.4 745.9,569.6" fill="none" stroke="#acacac" stroke-width="1.1" stroke-linejoin="round"/>
<polyline points="532.0,591.7 535.1,589.8 538.0,588.5 540.1,586.7 543.8,585.0 546.3,583.8 549.1,581.7 552.0,580.0 551.1,576.7 549.6,572.2 549.0,569.0" fill="none" stroke="#acacac" stroke-width="1.1" stroke-linejoin="round"/>
<polyline points="674.2,600.9 672.5,603.4 670.0,606.2 668.8,608.2 666.9,610.9 664.6,612.7 661.8,615.6 660.7,617.6 658.4,620.3 656.2,622.8 654.5,625.0 654.6,627.9 654.0,631.1 654.3,634.3 654.1,637.0 654.1,640.0 654.6,642.7 654.0,646.1 654.1,649.2 654.1,651.7 654.5,655.7 654.9,658.3 654.4,660.7 654.2,664.1 655.0,666.8 655.0,670.3 654.4,673.1 655.1,676.0 654.6,679.4 654.1,682.1 655.1,685.8 654.8,688.9 654.0,691.7 654.5,694.5 656.7,696.5 658.3,699.7 660.0,701.8 661.8,704.0 663.8,706.1 666.0,708.4" fill="none" stroke="#acacac" stroke-width="1.1" stroke-linejoin="round"/>
<polyline points="505.9,855.5 507.7,858.9 510.1,861.5 511.8,864.5 513.6,867.3 515.3,870.0 516.5,873.2 518.0,876.0 518.5,878.5 518.9,882.2 519.5,885.3 520.5,888.5 521.6,891.3 521.6,893.5 522.4,897.0" fill="none" stroke="#acacac" stroke-width="1.1" stroke-linejoin="round"/>
<polyline points="547.7,896.0 550.8,895.5 554.4,894.1 556.5,894.3 560.0,893.0 563.6,893.3 566.9,893.2 570.0,894.1 573.4,893.8 576.2,894.6 580.4,894.4 582.7,894.6 586.6,895.4" fill="none" stroke="#acacac" stroke-width="1.1" stroke-linejoin="round"/>
<polyline points="60.0,569.0 61.1,571.9 61.7,575.5 62.7,577.8 63.6,580.5 64.1,584.2 64.8,586.5 66.0,590.0 68.3,592.3 71.0,594.6 73.1,597.4 75.0,600.0 77.8,601.6 80.2,603.2 82.2,605.0 85.3,606.5 87.2,608.2 90.0,610.0 92.6,611.6 96.1,613.5 99.1,615.0 102.0,617.0 104.5,615.7 107.8,615.0 111.1,614.3 114.3,613.8 117.2,613.1 120.0,612.0 123.4,611.6 126.5,610.9 130.3,611.0 132.9,611.1 136.7,610.5 140.0,610.0 142.8,608.2 146.2,606.8 148.4,606.2 151.1,604.3 154.3,602.6 157.6,601.3 160.0,600.0" fill="none" stroke="#cfcfcf" stroke-width="0.9" stroke-linejoin="round"/>
<polyline points="100.0,569.0 100.3,572.2 101.1,575.6 102.8,579.0 102.7,582.0 104.0,585.0 106.8,585.7 109.8,586.2 112.6,587.3 115.6,588.3 118.5,589.0 121.7,588.9 125.0,590.0 128.2,589.0 131.3,588.0 134.1,586.6 137.2,586.0 140.0,585.0 143.6,585.7 145.8,587.6 149.8,588.6 152.7,589.9 155.5,591.0 158.8,591.8 161.6,593.7 164.9,594.7" fill="none" stroke="#cfcfcf" stroke-width="0.9" stroke-linejoin="round"/>
<polyline points="120.0,612.0 120.5,615.0 121.3,617.9 122.4,621.2 123.5,624.0 123.5,626.8 124.1,629.7 125.3,633.1 126.0,636.0" fill="none" stroke="#cfcfcf" stroke-width="0.9" stroke-linejoin="round"/>
<polyline points="72.0,680.0 74.7,678.8 77.6,678.0 81.0,677.3 84.4,676.7 86.8,675.8 90.0,675.0 92.0,677.1 95.3,678.6 97.7,680.4 99.7,682.2 102.2,684.5 105.1,686.5 107.1,688.4 110.0,690.0 113.0,689.9 116.0,689.9 118.7,689.9 122.1,690.2 125.4,689.7 128.4,690.3 131.2,690.5 134.0,690.0 136.3,691.9 139.7,693.0 142.1,695.4 144.5,697.0 147.7,698.3 150.0,700.0" fill="none" stroke="#cfcfcf" stroke-width="0.9" stroke-linejoin="round"/>
<polyline points="90.0,675.0 91.3,672.2 93.7,669.9 94.8,667.4 97.1,664.8 97.9,662.9 100.0,660.0" fill="none" stroke="#cfcfcf" stroke-width="0.9" stroke-linejoin="round"/>
<polyline points="110.0,690.0 110.6,692.9 112.1,695.8 112.0,699.4 112.9,701.7 114.4,704.7 115.2,707.8 115.4,710.7 116.4,714.1 117.1,717.0 118.0,720.0" fill="none" stroke="#cfcfcf" stroke-width="0.9" stroke-linejoin="round"/>
<polyline points="158.0,659.5 160.9,659.9 164.7,659.9 167.7,659.3 170.3,659.5 173.4,660.3 177.3,660.3 180.0,660.0 181.7,657.1 183.3,654.6 185.4,652.3 186.5,650.4 188.0,647.9 190.0,645.0" fill="none" stroke="#cfcfcf" stroke-width="0.9" stroke-linejoin="round"/>
<polyline points="150.0,700.0 152.9,700.2 155.9,700.4 159.3,699.8 162.7,700.1 165.4,699.6 168.8,699.5 172.2,699.8 175.0,700.0 177.7,700.7 180.6,701.6 184.0,702.6 186.8,703.3 189.9,704.7 192.9,705.6 195.9,705.8 198.6,707.5 201.9,708.0" fill="none" stroke="#cfcfcf" stroke-width="0.9" stroke-linejoin="round"/>
<polyline points="300.3,600.0 303.3,601.4 306.4,603.4 309.5,604.6 312.5,604.8 315.5,604.9 318.8,605.7 321.8,606.1 324.9,606.7 328.0,606.9 324.6,609.7 321.5,611.9 318.8,613.9 315.0,616.5 311.9,618.5 314.0,621.2 316.5,625.0 318.8,627.8 322.2,630.5 325.4,632.0 328.0,634.7 325.6,636.6 323.4,639.3" fill="none" stroke="#cfcfcf" stroke-width="0.9" stroke-linejoin="round"/>
<polyline points="304.9,648.6 307.5,650.9 309.8,653.5 312.4,655.7 314.2,657.8 316.1,660.5 316.8,663.6 318.4,665.5 320.7,668.4 322.0,670.8 323.4,674.0 325.4,676.5 327.6,678.7 330.4,681.0 332.8,683.0 334.5,685.9 336.4,688.2 338.5,689.8 339.9,692.6 342.7,694.6 344.2,697.2 345.1,700.7 346.1,704.8 346.5,708.7 350.0,710.0 353.1,711.2 357.2,712.5 360.4,713.3 363.1,711.9 365.9,711.4 369.0,709.7 372.0,708.7 372.7,705.9 373.2,702.5 374.3,699.9 374.6,696.2 375.9,693.9 376.2,690.5 377.3,687.6 377.2,684.2 378.1,681.7 378.9,678.6 381.1,682.5 383.6,685.6 387.6,684.8 391.4,684.2 395.1,683.3 398.0,684.7 400.7,686.1 403.8,687.1 406.5,688.6 409.0,690.2 411.7,687.5 413.6,685.5 416.2,683.0 418.3,681.0 421.2,680.0 424.6,679.7 427.1,678.7 430.4,678.8 433.8,677.7 436.7,677.1 440.0,676.3" fill="none" stroke="#cfcfcf" stroke-width="0.9" stroke-linejoin="round"/>
<polyline points="242.5,692.5 245.1,695.8 246.6,698.6 249.4,701.8 251.7,703.6 254.3,706.2 256.2,708.8 258.8,711.0 261.0,713.3 264.6,714.7 267.3,715.7 270.8,717.4 274.0,718.7 277.2,720.3 279.0,722.1 281.8,724.9 284.3,723.6 287.9,723.3 290.2,722.5 293.5,721.0 296.5,720.3 299.6,719.4 301.8,718.6 304.9,718.0 307.6,714.8 309.5,711.0" fill="none" stroke="#cfcfcf" stroke-width="0.9" stroke-linejoin="round"/>
<polyline points="281.8,724.9 280.5,727.3 278.9,730.7 277.2,733.7 276.5,736.5 274.8,738.8 273.6,741.7 272.5,744.1 270.5,746.8 269.0,750.2 267.9,752.7 267.0,756.4 266.9,760.0 266.8,763.3 266.4,766.1 265.6,770.0" fill="none" stroke="#cfcfcf" stroke-width="0.9" stroke-linejoin="round"/>
<polyline points="300.3,727.2 300.5,730.3 301.1,733.9 302.1,737.2 302.6,740.4 302.6,743.4 304.8,745.7 307.5,748.4 309.4,750.2 311.9,752.7 313.2,755.9 314.6,759.2 315.5,763.1 316.5,766.6 316.7,770.0 317.5,773.7 318.4,776.7 318.9,780.4 318.7,783.6 319.8,787.1 320.0,790.0" fill="none" stroke="#cfcfcf" stroke-width="0.9" stroke-linejoin="round"/>
<polyline points="351.2,720.3 353.0,723.3 354.0,726.6 355.8,729.5 354.9,732.7 354.6,735.8 353.7,738.3 353.6,741.6 352.4,744.5 351.8,747.6 351.2,750.4 352.0,753.5 353.2,757.3 353.8,760.0 354.0,763.7 355.4,766.9 355.8,770.0" fill="none" stroke="#cfcfcf" stroke-width="0.9" stroke-linejoin="round"/>
<polyline points="388.2,722.6 388.9,725.8 390.2,728.4 391.2,731.5 392.3,734.7 393.6,737.1 394.2,740.9 395.1,743.4 397.6,746.6 400.1,749.1 402.1,752.7 405.4,753.8 408.1,754.5 411.1,755.3 414.0,756.4 417.4,757.9 419.9,758.9 422.9,759.6" fill="none" stroke="#cfcfcf" stroke-width="0.9" stroke-linejoin="round"/>
<polyline points="412.0,667.0 415.2,666.5 418.3,666.4 422.3,665.8 424.9,665.3 428.2,664.6 432.0,664.0 434.7,665.2 437.3,667.7 440.0,669.0" fill="none" stroke="#cfcfcf" stroke-width="0.9" stroke-linejoin="round"/>
<polyline points="175.0,716.0 178.1,715.0 181.3,714.3 184.4,713.5 186.6,713.3 190.0,712.0 192.5,710.8 196.2,709.6 199.0,709.4 201.9,708.0" fill="none" stroke="#cfcfcf" stroke-width="0.9" stroke-linejoin="round"/>
<polyline points="460.0,770.0 459.3,773.2 458.6,777.0 457.6,780.1 456.5,783.2 456.3,787.1 455.0,790.0 452.8,793.0 451.4,797.0 450.0,800.0" fill="none" stroke="#cfcfcf" stroke-width="0.9" stroke-linejoin="round"/>
<polyline points="146.4,787.9 149.1,788.2 152.6,788.9 155.8,789.8 158.7,790.8 161.0,791.5 164.1,791.6 167.2,792.5 164.4,794.7 162.6,796.4 160.6,798.3 157.9,800.2 155.5,803.0 153.3,804.3 150.7,806.8 148.7,808.7 147.7,813.0 146.7,816.8 146.4,820.3 149.8,821.5 152.7,821.7 155.8,823.2 158.9,823.6 162.6,824.9 161.5,828.1 160.2,830.8 158.5,833.6 157.3,836.1 155.7,838.8 154.8,842.2 153.7,846.3 153.3,850.4 155.0,852.9 157.3,856.2 158.8,859.4 160.3,861.9 160.0,866.2 160.8,869.4 160.3,873.5" fill="none" stroke="#cfcfcf" stroke-width="0.9" stroke-linejoin="round"/>
<polyline points="162.6,824.9 165.5,824.7 169.5,824.3 172.2,823.6 175.2,822.8 178.8,822.6 181.8,821.3 184.5,820.0 188.0,818.0 191.0,819.0 194.7,819.5 198.7,820.2 201.9,820.3 204.7,822.1 207.3,823.9 209.8,825.5 213.1,826.3 215.8,828.4" fill="none" stroke="#cfcfcf" stroke-width="0.9" stroke-linejoin="round"/>
<polyline points="178.8,822.6 180.0,826.3 179.9,830.1 181.1,834.2 177.7,836.3 175.5,839.3 172.5,841.5 169.5,843.4 171.7,846.4 173.1,848.7 174.7,851.8 176.6,854.8 178.8,857.3 181.7,855.1 185.0,852.8 188.0,850.4 191.1,850.7 195.1,851.3 198.6,852.6 201.9,852.7 204.7,850.8 207.8,848.5 210.6,846.0 213.5,843.4 214.1,840.1 214.4,837.5 214.8,834.6 215.7,831.7 215.8,828.4" fill="none" stroke="#cfcfcf" stroke-width="0.9" stroke-linejoin="round"/>
<polyline points="160.3,861.9 163.7,861.2 166.7,861.3 170.0,860.3 172.3,860.8 175.6,860.2 178.8,859.6 181.2,862.4 183.3,865.5 186.2,868.3 188.0,871.2 191.8,870.4 195.2,870.2 198.7,869.9 201.9,868.9 204.4,871.1 207.8,872.1 210.6,873.7 213.5,875.8 216.1,878.5 219.5,880.8 221.8,882.4 225.0,885.1 227.8,882.8 231.0,880.2 233.9,878.2 236.6,875.8 239.1,874.6 241.6,872.8 244.4,870.7 247.4,869.7 250.2,868.0 252.8,866.6 256.3,865.7 258.6,863.8 262.5,863.0 264.7,861.6 268.4,860.4 271.3,859.6 274.0,858.4 276.9,857.0 280.4,855.7 282.9,854.2 285.5,852.8 288.7,851.3 291.4,850.1 294.0,848.7 297.6,846.6 300.0,845.7" fill="none" stroke="#cfcfcf" stroke-width="0.9" stroke-linejoin="round"/>
<polyline points="213.5,843.4 214.9,846.5 216.4,849.0 218.5,850.9 220.2,853.5 222.1,856.4 223.8,859.7 225.0,861.9 226.6,864.1 228.5,866.8 230.4,868.4 232.3,871.5 234.4,873.3 236.6,875.8" fill="none" stroke="#cfcfcf" stroke-width="0.9" stroke-linejoin="round"/>
<polyline points="252.8,866.6 253.8,863.6 254.8,860.9 255.7,857.3 257.3,854.0 257.6,851.5 258.8,848.5 260.4,844.9 260.9,841.5 262.1,838.8 265.6,838.4 268.3,837.7 271.3,838.0 274.4,837.3 278.0,836.9 281.1,836.4 283.9,836.4 287.8,835.8 290.3,835.8 293.4,834.6 297.0,834.9 300.0,834.2" fill="none" stroke="#cfcfcf" stroke-width="0.9" stroke-linejoin="round"/>
<polyline points="192.7,746.3 192.8,749.1 193.2,752.4 192.5,756.4 193.0,759.4 192.3,762.7 192.6,765.0 193.0,769.1 192.2,771.9 193.1,774.9 192.5,778.6 192.6,782.0 193.1,785.1 192.7,787.9" fill="none" stroke="#cfcfcf" stroke-width="0.9" stroke-linejoin="round"/>
<polyline points="257.4,700.0 258.8,702.6 259.9,705.9 260.9,708.7 261.9,711.2 263.6,714.3 264.0,717.8 265.5,720.4 266.7,723.1 266.2,726.0 265.8,729.8 265.4,733.1 265.1,736.3 264.6,739.1 264.2,742.0 264.2,745.4 263.9,748.5 263.3,751.8 263.6,754.8 262.7,758.7 262.5,761.3 262.1,764.8 262.1,767.5 260.7,770.5 260.5,774.4 259.8,776.9 259.8,779.8 258.5,783.4 258.0,786.4 257.6,789.5 257.4,792.5 258.7,795.7 259.1,799.1 260.4,801.8 260.9,805.3 262.1,808.7" fill="none" stroke="#cfcfcf" stroke-width="0.9" stroke-linejoin="round"/>
<polyline points="282.9,723.1 286.3,723.8 289.9,724.7 293.6,725.8 296.3,726.4 300.0,727.8" fill="none" stroke="#cfcfcf" stroke-width="0.9" stroke-linejoin="round"/>
<polyline points="430.0,837.0 431.0,839.7 433.0,842.9 434.0,846.0 435.2,850.0 437.0,853.3 437.5,856.3 439.0,860.0 442.0,861.4 444.8,863.0 448.0,865.0 445.9,867.9 444.4,870.3 442.5,873.1 440.9,875.2 439.2,878.3 437.0,881.0 439.6,883.7 442.8,885.4 444.8,887.7 448.0,890.0 450.9,890.5 453.6,891.4 457.0,892.0 459.0,890.0 461.5,887.3 464.1,885.2 465.6,882.8 467.8,880.7 470.9,878.9 472.9,875.9 475.0,874.0 476.7,871.1 478.9,868.9 480.5,866.1 482.9,863.7 485.3,860.8 487.1,858.0 489.0,855.8 491.0,853.0 488.6,849.5 487.0,846.0" fill="none" stroke="#cfcfcf" stroke-width="0.9" stroke-linejoin="round"/>
<polyline points="690.4,597.4 690.9,600.4 691.1,604.3 691.7,607.0 692.1,610.6 692.7,613.8 693.1,616.9 693.8,620.5 690.3,620.6 686.5,620.6 683.4,620.5 682.8,624.4 683.1,627.1 682.4,630.7 681.5,634.7 681.9,638.1 681.1,641.3 677.8,641.8 674.2,641.5 670.9,641.7 667.6,641.1 663.8,641.3 663.2,644.5 663.3,647.6 663.3,651.2 662.6,654.1 658.7,654.1 654.5,654.1" fill="none" stroke="#cfcfcf" stroke-width="0.9" stroke-linejoin="round"/>
<polyline points="681.1,641.3 683.4,643.3 685.6,645.6 687.7,648.4 689.2,650.3 691.6,652.9 693.8,654.8 696.0,657.5 697.7,660.1 699.9,662.1 701.9,664.5" fill="none" stroke="#cfcfcf" stroke-width="0.9" stroke-linejoin="round"/>
<polyline points="654.5,655.2 657.6,654.9 660.7,654.4 664.8,654.0 667.4,654.4 671.0,653.8 674.5,653.7 677.6,653.5 681.1,652.9 681.8,656.3 683.2,659.2 684.4,662.4 685.6,665.3 686.7,668.6 688.0,671.4" fill="none" stroke="#cfcfcf" stroke-width="0.9" stroke-linejoin="round"/>
<polyline points="693.8,620.5 697.1,619.3 700.2,619.2 702.7,617.6 706.0,617.0 709.8,617.7 712.3,617.8 716.5,617.5 719.6,617.8 722.7,618.2 723.0,621.3 722.7,624.0 722.9,627.7 722.5,630.1 722.3,633.4 722.7,636.7 720.5,638.2 717.6,639.5 714.2,640.4 712.2,642.1 709.6,643.3 706.5,644.5 704.0,645.5 700.4,646.6 697.7,647.8 695.5,649.1 692.7,650.6" fill="none" stroke="#cfcfcf" stroke-width="0.9" stroke-linejoin="round"/>
<polyline points="722.7,587.0 722.7,589.7 723.0,593.3 723.5,596.8 723.2,599.2 723.4,603.0 724.2,605.9 724.6,608.3 724.9,611.8 724.9,615.0 725.0,618.2" fill="none" stroke="#cfcfcf" stroke-width="0.9" stroke-linejoin="round"/>
<polyline points="732.0,618.2 733.0,621.1 733.3,624.1 734.5,627.4 734.7,630.4 735.9,633.5 736.6,636.7" fill="none" stroke="#cfcfcf" stroke-width="0.9" stroke-linejoin="round"/>
<polyline points="722.7,618.2 726.0,618.5 729.2,618.5 732.1,618.6 735.9,618.2 738.2,617.8 742.1,618.6 745.2,618.2 748.2,618.2 750.0,614.9 751.7,612.9 753.1,609.6 755.1,606.6 758.2,608.2 760.5,609.1 763.7,611.2 766.6,612.1 769.0,613.6" fill="none" stroke="#cfcfcf" stroke-width="0.9" stroke-linejoin="round"/>
<polyline points="741.2,578.9 744.3,580.9 746.9,582.6 749.8,583.8 752.8,585.8 752.7,589.5 753.8,592.3 753.5,596.0 754.0,599.9 754.4,603.2 755.1,606.6" fill="none" stroke="#cfcfcf" stroke-width="0.9" stroke-linejoin="round"/>
<polyline points="776.0,574.3 776.4,577.6 777.1,581.1 777.2,584.8 777.4,587.8 778.4,591.8 778.3,595.0 781.8,595.0 785.2,595.0" fill="none" stroke="#cfcfcf" stroke-width="0.9" stroke-linejoin="round"/>
<polyline points="600.0,569.0 599.5,571.8 598.4,575.0 598.7,577.6 598.2,580.9 597.6,584.3 596.3,586.7 596.0,590.0" fill="none" stroke="#cfcfcf" stroke-width="0.9" stroke-linejoin="round"/>
<polyline points="640.0,569.0 638.2,571.8 635.9,573.8 633.4,576.3 631.4,578.7 628.7,581.0 627.1,583.1 624.0,585.0 622.4,587.6 620.0,590.0 621.3,593.1 621.9,595.6 622.5,599.1 623.8,602.2 624.0,604.8 625.5,607.3 625.4,610.3 626.7,613.6" fill="none" stroke="#cfcfcf" stroke-width="0.9" stroke-linejoin="round"/>
<polyline points="405.0,569.0 408.2,570.0 411.2,571.7 414.3,572.1 417.2,574.1 420.0,575.0 423.5,576.2 427.0,576.8 430.4,577.5 432.9,578.1 437.1,579.0 440.0,580.0 442.5,578.7 445.2,577.0 447.5,575.0 449.6,573.0 452.2,571.7 455.0,570.0" fill="none" stroke="#cfcfcf" stroke-width="0.9" stroke-linejoin="round"/>
<polyline points="500.0,569.0 500.7,571.6 501.6,574.6 502.0,577.5 502.8,580.6 504.0,583.9 504.6,586.9 505.0,590.0 503.8,593.2 502.8,595.7 502.1,599.1 501.2,601.0 500.0,604.7 499.4,607.0 498.0,610.0" fill="none" stroke="#cfcfcf" stroke-width="0.9" stroke-linejoin="round"/>
<polyline points="464.9,833.2 465.8,835.9 467.7,838.8 469.1,841.8 470.0,845.0" fill="none" stroke="#cfcfcf" stroke-width="0.9" stroke-linejoin="round"/>
<polygon points="457.3,698.0 462.6,696.4 525.5,696.3 547.8,709.6 562.2,717.6 584.6,730.4 591.0,733.6 593.4,737.6 592.6,742.4 595.8,746.4 611.9,758.4 621.0,765.0 618.2,780.9 614.5,790.2 618.2,799.5 623.8,810.7 624.7,821.9 625.7,836.8 628.5,851.6 635.0,864.7 644.3,872.1 641.0,878.0 630.0,884.0 616.0,889.0 606.0,896.0 606.0,902.0 538.9,902.0 538.9,895.3 537.3,884.0 534.0,871.2 530.9,861.6 522.8,856.8 518.0,856.8 502.0,852.0 486.0,847.2 474.0,843.0 467.1,837.7 464.9,831.0 458.2,815.3 448.1,804.1 442.5,795.2 441.3,790.0 441.3,781.6 440.2,775.2 438.1,769.9 437.0,764.5 439.2,761.4 445.6,759.2 450.9,756.0 455.1,749.6 460.5,745.4 462.6,740.0 463.7,734.7 459.4,732.6 456.7,728.3 458.3,724.1 462.6,720.9 464.2,717.7 464.7,711.3 463.7,706.0 460.5,702.8" fill="#72c576"/>
<polygon points="629.4,768.8 632.5,769.0 633.1,776.0 631.0,780.0 629.0,777.0" fill="#72c576" stroke="#3a3d3a" stroke-width="1.4"/>
<polygon points="620.0,784.6 623.0,785.0 626.0,790.0 628.5,797.0 626.0,799.5 622.0,794.0 620.0,789.0" fill="#72c576" stroke="#3a3d3a" stroke-width="1.4"/>
<polygon points="630.0,821.0 634.5,820.5 633.0,826.0 629.0,829.3 628.5,826.0" fill="#72c576" stroke="#3a3d3a" stroke-width="1.4"/>
<path d="M454.3,750.8 L457.5,754.0 L461.4,757.8 L462.4,764.7 L465.4,770.5 L472.2,770.5 L473.2,776.4 L471.6,781.3 L469.3,786.2 L468.3,794.0 L466.3,798.9 L466.8,803.4 L467.3,807.7 L470.5,810.7 L474.2,813.6 L476.1,818.5 L475.7,823.7 L475.1,828.3 L468.3,832.2M447.7,778.4 L451.3,776.3 L455.6,774.5 L463.4,774.5 L469.3,779.4M469.3,786.2 L474.3,786.7 L480.0,786.7 L486.9,785.2 L491.5,782.3 L495.7,780.3 L499.5,778.3 L502.5,775.4 L507.2,777.1 L511.3,778.2 L516.2,780.3 L521.1,780.9 L526.0,782.3 L530.0,780.3 L534.1,781.1 L538.7,782.3 L541.7,779.8 L545.6,777.4M483.9,785.2 L483.8,781.3 L483.9,776.9 L483.9,772.5 L485.9,765.7 L490.8,768.6 L496.7,767.6 L497.6,771.6 L498.6,775.4M475.1,750.0 L475.1,755.9 L478.1,760.8 L476.6,765.0 L475.1,769.6 L472.2,770.5M481.0,753.9 L485.3,755.8 L488.8,756.8 L495.7,756.8 L496.5,762.4 L496.7,767.6M511.3,750.0 L511.6,754.7 L512.3,759.8 L513.3,767.6 L517.5,766.7 L522.1,766.6 L524.3,770.8 L526.3,775.0 L528.0,779.4M522.1,766.6 L521.1,759.8 L526.0,753.9 L528.0,750.0M486.9,785.2 L488.8,791.1 L492.8,793.7 L495.6,795.4 L499.6,797.9 L499.0,803.3 L497.6,808.7 L494.6,811.1 L490.8,813.6 L486.9,818.5 L481.0,817.5 L476.1,818.5M497.6,807.7 L501.6,807.4 L506.4,806.8 L510.6,807.5 L514.3,808.7 L517.8,812.9 L522.1,817.5 L520.1,823.1 L517.2,828.3 L516.9,833.9 L517.2,840.0M514.3,808.7 L514.9,804.4 L516.2,800.9 L518.2,796.9 L519.8,793.4 L521.2,789.9 L522.9,786.1 L525.0,782.3M522.1,817.5 L525.7,815.8 L529.6,814.0 L533.8,812.6 L539.7,807.7 L546.0,805.8M519.2,824.4 L524.5,825.0 L528.8,825.3 L533.8,825.3 L537.6,826.2 L542.3,827.4 L546.0,828.3M455.6,808.7 L461.1,808.6 L467.3,807.7M449.7,782.3 L450.7,786.7 L452.4,791.4 L453.2,795.9 L454.6,800.9 L450.7,804.8M476.1,818.5 L479.5,821.1 L483.3,823.7 L487.1,826.1 L491.4,828.6 L494.7,831.2 L499.7,834.0 L504.5,836.1M522.1,766.6 L525.7,765.3 L530.3,765.0 L533.8,763.7 L538.0,761.0 L542.7,758.8M439.3,761.4 L442.1,760.6 L443.7,759.9M446.1,758.9 L452.6,760.8 L453.8,765.6 L455.6,769.6 L460.8,770.1 L465.4,770.5M441.5,768.0 L447.0,770.0 L452.0,775.0M444.8,791.0 L450.5,791.0 L452.5,795.6 L454.6,800.9M447.0,797.0 L448.3,801.1 L450.1,804.5 L452.0,808.0 L453.7,810.3M457.3,814.3 L458.0,815.0M464.7,830.6 L468.3,832.2M480.0,843.0 L481.7,838.7 L484.0,834.0 L489.0,832.4 L494.7,831.2M500.0,850.0 L501.6,845.7 L503.1,840.5 L504.5,836.1M511.0,852.0 L512.4,846.7 L513.0,842.0M567.3,750.0 L566.9,754.7 L567.3,759.4 L567.3,764.7 L566.8,768.7 L566.9,772.7 L566.4,777.5 L566.3,781.3 L570.3,784.7 L573.7,787.9 L577.1,791.1 L575.8,795.6 L575.1,800.9 L573.4,805.5 L572.7,809.8 L571.2,813.6M568.3,762.7 L575.1,760.8 L579.1,764.7 L580.1,769.2 L582.0,773.5 L586.9,776.4 L585.4,780.5 L584.0,784.2 L580.4,788.1 L577.1,791.1M588.8,750.0 L589.8,757.8 L593.8,760.8 L598.6,763.7 L602.7,760.2 L606.4,755.9M598.6,763.7 L598.6,771.5 L590.8,772.5 L586.9,776.4M600.6,771.5 L599.8,775.6 L598.6,779.4 L594.7,783.3 L596.7,787.2 L601.4,789.0 L605.5,790.1 L609.8,790.3 L614.3,790.1 L615.3,797.9 L618.2,799.9M600.6,779.4 L606.3,779.7 L611.3,779.4 L611.7,774.8 L612.3,769.6 L619.2,769.6 L621.0,765.0M596.7,787.2 L597.7,791.8 L598.1,796.2 L598.6,800.9 L604.5,804.8 L612.3,803.8 L618.2,799.9M586.9,787.2 L587.6,791.9 L587.8,796.5 L588.8,800.9 L586.8,805.1 L583.9,808.7 L585.9,813.6 L584.7,818.9 L583.0,824.4 L589.1,825.4 L594.7,826.3 L597.9,824.0 L600.9,821.3 L604.5,818.5 L608.5,818.6 L613.3,818.3 L617.9,818.5 L622.1,818.5M541.9,750.0 L541.5,754.8 L540.9,758.8 L545.8,764.7 L544.8,770.5 L545.9,774.0 L547.2,778.5 L548.7,782.3 L547.5,786.2 L547.1,790.9 L545.8,795.0 L544.7,800.3 L543.8,804.8 L537.0,808.7M548.7,782.3 L556.5,781.3 L560.8,780.5 L565.4,779.4M536.0,807.7 L541.6,807.2 L547.7,806.8 L551.9,808.5 L555.9,809.3 L559.5,810.7 L564.0,812.5 L568.3,814.6 L572.4,818.5 L577.1,822.4 L582.0,824.4M560.5,795.0 L561.8,800.2 L562.4,804.8 L559.5,810.7M536.0,779.4 L541.1,778.3 L545.8,776.4 L550.5,774.2 L555.6,772.5 L560.9,770.8 L566.3,769.6M536.0,830.2 L540.6,828.2 L545.8,826.3 L550.8,825.3 L555.6,824.4 L558.3,820.8 L561.4,816.5 L568.3,814.6M555.6,824.4 L556.7,828.9 L556.5,833.1 L557.5,838.1M565.4,838.1 L568.1,833.7 L570.2,830.2 L576.3,829.3 L582.0,828.3 L583.0,824.4M594.7,826.3 L596.7,833.2 L601.1,834.4 L605.4,834.8 L610.4,836.1 L616.2,834.7 L622.1,834.1M540.9,758.8 L545.4,757.9 L549.0,757.1 L553.6,756.8 L558.3,756.5 L562.9,756.3 L567.3,755.9M500.6,696.4 L500.9,701.2 L500.6,705.2 L499.8,710.0 L499.4,714.9 L498.6,720.4 L503.0,722.0M475.0,706.0 L479.1,705.6 L482.8,705.7 L487.6,705.3 L491.3,705.3 L495.8,705.4 L499.8,705.2 L504.4,705.6 L508.8,705.7 L513.8,705.2 L518.3,705.9 L522.1,705.8 L527.0,706.0M500.6,705.2 L497.1,708.1 L493.2,710.3 L490.0,713.0 L486.4,715.2 L482.5,717.5 L478.9,720.6 L475.0,722.8M465.4,697.2 L466.3,702.2 L467.0,706.8 L466.2,711.2 L466.4,715.2 L465.4,718.8 L469.4,719.1 L473.4,718.8 L473.6,715.2 L474.2,710.8 L475.0,706.0 L479.3,703.9 L483.0,702.0 L482.6,696.4M473.4,718.8 L479.0,722.8 L477.4,730.0 L473.8,734.3 L471.0,738.8 L471.0,743.8 L471.0,748.4 L475.1,750.0M465.4,718.8 L465.0,723.2 L464.6,728.4 L466.5,733.2 L467.8,738.8 L463.0,742.8M479.0,722.8 L484.1,724.1 L488.6,726.0 L493.4,730.8 L493.3,735.1 L493.4,738.8 L498.2,742.0 L499.5,745.7 L501.4,750.0 L506.4,750.2 L511.3,750.0M527.0,706.0 L527.9,710.4 L528.5,714.5 L528.7,718.8 L533.5,723.6 L539.7,723.6 L545.0,724.4M525.5,729.2 L529.4,729.0 L533.6,728.9 L538.0,728.5 L542.4,728.3 L546.2,728.0M525.5,733.2 L529.5,732.9 L534.1,733.2 L537.7,733.0 L542.5,732.6 L546.2,732.4M535.0,724.0 L540.7,723.7 L546.2,724.0M525.5,729.2 L525.5,734.0 L525.5,738.8 L526.3,744.0 L527.0,750.0 L528.0,750.0M540.7,732.4 L541.1,736.7 L540.6,741.2 L540.7,745.2M503.0,722.0 L507.1,723.2 L511.0,724.4 L514.4,726.8 L517.4,730.0 L521.5,729.5 L525.5,729.2M509.4,715.6 L513.8,714.4 L517.4,712.4 L518.0,708.0 L519.0,703.6 L523.0,706.0 L527.0,710.0M491.8,738.8 L495.2,737.1 L499.6,736.0 L503.0,734.0 L509.4,732.4 L515.0,735.6 L520.2,737.0 L525.5,738.8M457.2,729.1 L460.3,728.9 L464.6,728.4M547.8,709.6 L548.2,713.7 L547.8,718.4 L545.4,724.0 L546.1,728.4 L546.2,733.6 L540.6,732.0 L540.3,736.0 L540.8,740.4 L540.6,744.8 L537.4,749.6M562.2,717.6 L561.5,722.0 L560.8,726.3 L560.6,730.4 L559.5,734.4 L559.0,738.4 L557.6,742.9 L556.6,748.0 L555.8,751.9 L555.0,756.0M535.0,737.6 L538.9,739.9 L543.0,742.4 L549.4,740.0 L554.2,738.5 L559.0,737.6M539.0,749.6 L542.7,748.7 L547.1,747.5 L551.0,746.4 L556.6,748.0 L560.6,746.4 L564.1,750.9 L567.0,755.2 L567.0,760.0M570.2,738.4 L571.0,741.6 L576.6,746.4 L581.7,743.8 L586.2,741.6 L590.0,739.9 L593.4,737.6M567.0,748.4 L572.2,747.2 L576.6,746.4M586.2,741.6 L587.6,746.0 L589.4,749.6 L589.5,755.2 L590.2,760.0M589.4,749.6 L595.8,748.0M605.5,755.2 L603.9,760.0M542.2,752.8 L541.4,760.0M534.0,860.0 L540.0,858.9 L545.3,858.4 L549.3,856.5 L553.6,853.8 L558.1,852.0 L559.2,847.9 L559.7,844.0 L563.2,840.9 L566.0,838.6 L568.9,835.3 L572.5,832.8 L577.5,832.4 L582.1,831.2 L583.6,835.7 L584.2,841.0 L585.3,845.6 L583.7,849.8 L581.8,853.2 L580.1,857.2 L578.9,861.6 L574.9,862.4 L571.0,862.9 L566.6,863.7 L562.9,864.8 L556.5,863.2M556.5,863.2 L558.4,869.3 L559.7,874.5 L559.4,878.4 L558.0,883.5 L557.7,887.6 L557.0,891.7 L556.5,896.0M578.9,861.6 L577.3,865.3 L575.8,868.7 L574.1,872.9 L574.0,877.8 L573.2,882.1 L573.4,886.7 L572.5,891.1 L572.5,896.0M574.1,869.6 L578.1,870.0 L582.5,871.5 L586.3,872.4 L590.2,872.8 L594.2,873.7 L598.1,874.5 L601.7,872.3 L604.3,870.0 L607.9,867.5 L610.9,864.8 L611.6,860.6 L612.2,856.9 L612.4,852.7 L613.0,848.3 L613.4,843.8 L613.5,840.1 L614.1,836.0 L612.5,831.9 L611.8,828.1 L610.3,824.4 L609.3,820.0M594.9,828.0 L592.4,831.1 L589.7,834.5 L586.9,837.6 L586.1,841.5 L585.3,845.6M598.1,874.5 L599.3,879.0 L599.9,883.5 L600.9,887.3 L601.3,892.1 L606.0,896.0M610.9,864.8 L614.7,863.4 L618.1,861.5 L622.1,860.0 L625.7,857.3 L630.2,855.2M548.5,858.4 L548.2,862.2 L547.9,867.1 L548.0,870.9 L548.2,875.2 L548.1,879.4 L547.7,883.1 L547.3,887.9 L546.7,892.2 L546.9,896.0M474.8,820.0 L476.1,825.6 L478.0,831.2 L481.5,833.1 L485.8,834.6 L489.9,836.9 L493.4,839.0 L497.2,840.8 L501.9,840.6 L506.9,840.9 L511.6,840.8 L515.4,841.8 L519.5,842.0 L523.4,842.8 L527.7,844.0 L533.0,843.4 L538.9,842.4 L542.5,844.4 L546.6,845.2 L550.1,847.2M518.0,823.2 L517.9,827.9 L516.5,832.1 L516.4,836.0 L520.1,838.6 L524.4,841.1 L527.7,844.0M535.7,832.8 L540.5,832.7 L545.5,831.7 L550.1,831.2 L553.7,835.8 L556.6,839.4 L559.7,844.0M521.2,823.2 L525.5,824.1 L529.3,824.7 L533.8,825.7 L537.9,827.2 L542.1,828.0 L545.8,826.2 L549.6,824.7 L553.3,823.2M566.1,829.6 L570.1,827.5 L574.0,825.7 L577.3,823.2 L581.9,824.2 L585.8,826.0 L590.8,826.9 L594.9,828.0 L599.6,829.9 L604.7,832.3 L609.3,834.4 L614.1,836.0M614.1,836.0 L619.0,834.5 L623.7,832.8 L625.2,837.0 L626.1,842.2 L627.2,844.8M630.0,854.6 L630.2,855.2 L630.5,855.5M642.4,870.6 L643.0,871.2M607.7,876.1 L612.0,875.2 L616.1,873.9 L620.5,872.9 L625.1,870.3 L630.2,868.0 L634.7,869.4 L638.4,869.8 L643.0,871.2M525.6,750.0 L524.8,749.0M524.8,737.4 L523.5,738.7M524.8,749.0 L524.0,745.8 L524.4,741.6 L523.5,738.7M524.8,749.0 L520.3,748.1 L516.6,746.6M523.5,738.7 L521.3,739.7 L517.8,741.2 L515.3,742.6M516.6,746.6 L515.3,742.6M498.6,750.3 L499.1,748.3M510.0,751.2 L509.8,750.6 L508.6,747.8 L507.4,744.7M499.1,748.3 L502.1,747.6 L504.7,746.1 L507.4,744.7M516.6,746.6 L515.0,749.5 L514.4,751.5M507.4,744.7 L508.2,742.9M515.3,742.6 L512.7,741.3M512.7,741.3 L508.2,742.9M512.7,741.3 L513.4,738.2 L513.1,735.2 L513.0,734.1M496.4,744.6 L498.3,742.0 L500.0,738.4 L501.9,735.9M496.4,744.6 L499.1,748.3M508.2,742.9 L506.6,740.9 L504.0,738.3 L501.9,735.9M496.4,744.6 L491.4,743.2M489.1,751.2 L488.1,748.0 L487.6,745.5M487.6,745.5 L491.4,743.2M487.6,745.5 L483.4,744.6M480.1,753.0 L480.6,752.0 L482.1,747.6 L483.4,744.6M491.4,743.2 L491.0,739.1 L491.1,736.4 L490.6,732.5M501.9,735.9 L501.2,733.1 L500.9,731.1M490.6,732.5 L492.9,730.1 L494.2,728.0M490.6,732.5 L488.0,733.2 L484.0,733.8 L481.2,735.0M483.4,744.6 L479.3,741.1M479.3,741.1 L480.6,737.6 L481.2,735.0M478.6,741.3 L475.1,739.9 L471.6,738.0 L468.9,736.0M478.6,741.3 L475.8,743.4 L473.3,746.2M470.4,746.7 L468.0,744.2 L464.4,740.8M470.4,746.7 L473.3,746.2M464.4,740.8 L466.3,737.9 L468.9,736.0M478.0,753.4 L477.1,751.7 L475.7,749.0 L473.3,746.2M479.3,741.1 L478.6,741.3M466.9,752.9 L467.6,751.7 L468.6,748.9 L470.4,746.7M462.3,740.7 L464.4,740.8M481.2,735.0 L479.0,731.4 L476.5,728.4M476.5,728.4 L478.5,725.3 L479.7,722.9 L479.9,722.7M464.6,710.7 L465.5,710.5 L467.0,710.3M469.3,733.3 L471.6,730.4 L473.9,728.5M469.3,733.3 L465.7,731.8 L462.5,729.3M473.9,728.5 L471.3,726.0 L469.0,723.5M469.0,723.5 L463.2,724.6M463.2,724.6 L462.5,729.3M468.9,736.0 L469.3,733.3M476.5,728.4 L473.9,728.5M459.0,732.0 L460.2,731.1 L462.5,729.3M469.9,719.8 L469.6,720.5 L469.0,723.5M460.9,722.1 L463.2,724.6M528.8,715.3 L528.8,715.3 L525.8,714.5 L523.0,714.7M525.4,722.0 L524.4,720.8 L524.2,717.5 L523.0,714.7M512.4,708.7 L513.1,706.0 L513.7,705.0M512.4,708.7 L515.9,711.9 L518.7,715.0M523.8,705.0 L523.7,705.3 L522.8,708.0 L522.9,710.7 L522.0,714.0M518.7,715.0 L522.0,714.0M509.3,710.4 L509.6,710.3 L512.4,708.7M513.7,722.0 L513.7,722.0 L514.6,719.3 L517.0,717.0 L518.7,715.0M523.0,714.7 L522.0,714.0M616.3,763.8 L614.3,765.0 L611.7,766.2 L608.2,767.5 L605.6,769.4 L603.3,770.8M602.8,761.8 L603.4,764.7 L603.8,767.8 L603.3,770.8M625.3,830.7 L625.1,830.3 L622.9,827.6 L621.3,825.1 L619.5,822.1 L616.9,820.5 L615.6,817.2 L613.1,814.3 L611.8,812.0M622.7,808.4 L620.9,809.4 L617.4,809.9 L614.9,810.8 L611.8,812.0M620.8,834.4 L618.4,832.8 L615.5,830.8 L612.8,830.1 L610.2,827.6 L606.4,826.3 L604.0,824.6M604.0,824.6 L601.3,826.5 L598.6,827.0 L597.8,827.3M603.3,770.8 L603.1,771.2M603.1,771.2 L597.8,772.4M589.3,767.1 L590.0,767.5 L592.4,769.2 L595.3,770.5 L597.8,772.4M604.0,824.6 L603.7,821.1 L604.4,818.0 L604.8,814.3M611.8,812.0 L609.9,811.0M609.9,811.0 L607.1,813.0 L604.8,814.3M592.7,816.4 L594.3,815.5 L597.1,814.3 L599.3,813.4M599.3,813.4 L604.8,814.3M603.6,789.8 L604.6,793.8 L606.6,797.7M603.6,789.8 L605.6,787.1 L607.3,785.1 L608.4,781.4 L610.5,779.3M617.1,796.7 L617.0,796.7 L614.1,797.9 L611.6,797.8 L608.6,799.1M618.6,778.7 L616.8,778.6 L614.0,779.1 L610.5,779.3M608.6,799.1 L606.6,797.7M603.1,771.2 L605.1,774.3 L607.6,776.3 L610.5,779.3M601.9,789.4 L603.6,789.8M601.9,789.4 L599.6,786.1 L598.9,783.8 L596.3,780.3 L595.0,778.1M597.8,772.4 L596.9,775.5 L595.0,778.1M609.9,811.0 L610.1,806.6 L609.5,802.6 L608.6,799.1M594.7,802.8 L597.4,801.1 L600.1,800.0 L603.3,798.9 L606.6,797.7M594.7,802.8 L595.8,805.7 L597.9,809.6 L599.3,813.4M590.1,790.3 L591.4,793.6 L591.5,796.0 L592.8,799.7 L594.0,802.6M590.1,790.3 L586.7,788.9M594.0,802.6 L591.1,803.9 L588.3,805.1 L587.6,805.5M601.9,789.4 L598.4,789.5 L594.5,789.9 L590.1,790.3M594.7,802.8 L594.0,802.6M595.0,778.1 L593.0,780.1 L590.3,781.9 L587.5,783.2M475.6,831.0 L477.2,833.9 L478.6,836.6M472.9,842.2 L473.9,841.1 L476.7,839.3 L478.6,836.6M526.8,853.1 L524.8,850.4M526.8,853.1 L528.1,850.4 L530.0,847.7 L531.5,845.4 L532.1,842.6 L533.3,839.7 L534.5,837.4M524.8,850.4 L524.8,846.8 L524.7,844.3 L524.0,841.6 L524.1,838.9 L524.0,836.3M528.6,860.3 L528.0,859.2 L527.7,856.4 L526.8,853.1M500.3,851.5 L500.3,851.4 L501.0,849.5 L502.1,846.0M524.8,850.4 L522.4,848.9 L519.3,847.1 L517.2,845.1M502.1,846.0 L505.1,845.8 L508.4,845.2 L511.6,845.5 L513.8,845.8 L517.2,845.1M501.5,844.0 L501.9,840.4 L501.8,838.1 L502.5,834.6 L502.4,833.9M501.5,844.0 L498.1,844.1 L496.1,843.5 L492.6,842.2 L489.7,842.8 L486.6,841.8M486.0,838.1 L486.6,841.8M486.0,838.1 L487.3,834.9 L489.5,832.6 L489.5,832.5M502.1,846.0 L501.5,844.0M517.2,845.1 L516.7,841.6 L514.8,839.6 L514.3,835.9 L513.8,835.2M484.5,846.7 L485.0,844.6 L486.6,841.8M478.6,836.6 L482.0,836.8 L486.0,838.1M631.2,864.8 L631.0,866.2M641.7,876.8 L639.9,874.8 L637.9,873.2 L635.1,870.4 L633.2,868.3 L631.0,866.2M611.4,871.9 L613.5,869.4 L614.5,867.0 L616.0,864.1M611.4,871.9 L611.9,875.9 L612.5,879.3M616.0,864.1 L618.9,866.2 L621.1,868.1 L624.2,870.9M612.5,879.3 L614.6,881.2 L615.9,884.2M615.9,884.2 L617.7,882.4 L620.1,880.0 L623.0,877.8 L624.9,875.1M624.9,875.1 L624.2,870.9M601.2,870.2 L603.1,871.1 L605.9,871.0 L608.7,871.5 L611.4,871.9M615.9,863.4 L616.0,864.1M602.5,878.7 L603.9,878.5 L606.6,878.9 L609.0,878.6 L612.5,879.3M631.0,866.2 L627.9,868.3 L624.2,870.9M615.9,889.0 L615.5,887.4 L615.9,884.2M636.3,880.5 L632.9,878.9 L630.5,877.7 L627.4,876.5 L624.9,875.1M577.7,728.0 L577.2,729.5 L575.7,731.8 L575.4,735.2 L574.1,737.5 L573.1,740.2 L572.1,742.7M577.4,742.8 L580.5,741.4 L582.3,738.4 L585.3,737.0 L587.1,735.4 L589.6,732.9M577.4,742.8 L581.7,744.1 L586.1,745.2M586.1,745.2 L589.1,742.5 L590.5,740.8 L593.1,739.2M572.4,743.4 L577.4,742.8M587.7,750.0 L587.0,747.9 L586.1,745.2M593.6,750.0 L593.7,748.7 L595.1,745.5" fill="none" stroke="#3a3d3a" stroke-width="1.1" stroke-linejoin="round"/>
<polygon points="457.3,698.0 462.6,696.4 525.5,696.3 547.8,709.6 562.2,717.6 584.6,730.4 591.0,733.6 593.4,737.6 592.6,742.4 595.8,746.4 611.9,758.4 621.0,765.0 618.2,780.9 614.5,790.2 618.2,799.5 623.8,810.7 624.7,821.9 625.7,836.8 628.5,851.6 635.0,864.7 644.3,872.1 641.0,878.0 630.0,884.0 616.0,889.0 606.0,896.0 606.0,902.0 538.9,902.0 538.9,895.3 537.3,884.0 534.0,871.2 530.9,861.6 522.8,856.8 518.0,856.8 502.0,852.0 486.0,847.2 474.0,843.0 467.1,837.7 464.9,831.0 458.2,815.3 448.1,804.1 442.5,795.2 441.3,790.0 441.3,781.6 440.2,775.2 438.1,769.9 437.0,764.5 439.2,761.4 445.6,759.2 450.9,756.0 455.1,749.6 460.5,745.4 462.6,740.0 463.7,734.7 459.4,732.6 456.7,728.3 458.3,724.1 462.6,720.9 464.2,717.7 464.7,711.3 463.7,706.0 460.5,702.8" fill="none" stroke="#3a3d3a" stroke-width="1.1" stroke-linejoin="round"/>
<text x="116.3" y="592.0" text-anchor="middle" font-size="12" fill="#707070" stroke="#f4f4f4" stroke-width="2.2" paint-order="stroke" stroke-linejoin="round">Cameroon</text>
<text x="116.3" y="592.0" text-anchor="middle" font-size="12" fill="#707070" stroke="#707070" stroke-width="0.35">Cameroon</text>
<circle cx="103.8" cy="605.3" r="1.4" fill="#555" stroke="#f4f4f4" stroke-width="0.8"/>
<text x="103.8" y="613.5" text-anchor="middle" font-size="7.6" fill="#7a7a7a" stroke="#f4f4f4" stroke-width="2.2" paint-order="stroke" stroke-linejoin="round">Yaoundé</text>
<circle cx="53.0" cy="606.0" r="1.4" fill="#555" stroke="#f4f4f4" stroke-width="0.8"/>
<text x="58.0" y="603.5" text-anchor="middle" font-size="7.6" fill="#7a7a7a" stroke="#f4f4f4" stroke-width="2.2" paint-order="stroke" stroke-linejoin="round">elabo</text>
<text x="85.3" y="645.5" text-anchor="middle" font-size="8.6" fill="#7e7e7e" stroke="#f4f4f4" stroke-width="2.2" paint-order="stroke" stroke-linejoin="round">Equatorial</text>
<text x="85.3" y="645.5" text-anchor="middle" font-size="8.6" fill="#7e7e7e" stroke="#7e7e7e" stroke-width="0.35">Equatorial</text>
<text x="85.3" y="656.5" text-anchor="middle" font-size="8.6" fill="#7e7e7e" stroke="#f4f4f4" stroke-width="2.2" paint-order="stroke" stroke-linejoin="round">Guinea</text>
<text x="85.3" y="656.5" text-anchor="middle" font-size="8.6" fill="#7e7e7e" stroke="#7e7e7e" stroke-width="0.35">Guinea</text>
<text x="109.4" y="692.0" text-anchor="middle" font-size="8.6" fill="#7e7e7e" stroke="#f4f4f4" stroke-width="2.2" paint-order="stroke" stroke-linejoin="round">Gabon</text>
<text x="109.4" y="692.0" text-anchor="middle" font-size="8.6" fill="#7e7e7e" stroke="#7e7e7e" stroke-width="0.35">Gabon</text>
<circle cx="53.0" cy="691.0" r="1.4" fill="#555" stroke="#f4f4f4" stroke-width="0.8"/>
<text x="61.0" y="699.2" text-anchor="middle" font-size="7.6" fill="#7a7a7a" stroke="#f4f4f4" stroke-width="2.2" paint-order="stroke" stroke-linejoin="round">-Gentil</text>
<text x="187.0" y="681.5" text-anchor="middle" font-size="8.6" fill="#7e7e7e" stroke="#f4f4f4" stroke-width="2.2" paint-order="stroke" stroke-linejoin="round">Republic of</text>
<text x="187.0" y="681.5" text-anchor="middle" font-size="8.6" fill="#7e7e7e" stroke="#7e7e7e" stroke-width="0.35">Republic of</text>
<text x="187.0" y="692.0" text-anchor="middle" font-size="8.6" fill="#7e7e7e" stroke="#f4f4f4" stroke-width="2.2" paint-order="stroke" stroke-linejoin="round">the Congo</text>
<text x="187.0" y="692.0" text-anchor="middle" font-size="8.6" fill="#7e7e7e" stroke="#7e7e7e" stroke-width="0.35">the Congo</text>
<circle cx="234.3" cy="595.6" r="1.4" fill="#555" stroke="#f4f4f4" stroke-width="0.8"/>
<text x="234.3" y="603.3" text-anchor="middle" font-size="7.6" fill="#7a7a7a" stroke="#f4f4f4" stroke-width="2.2" paint-order="stroke" stroke-linejoin="round">Bangui</text>
<circle cx="308.3" cy="636.3" r="1.4" fill="#555" stroke="#f4f4f4" stroke-width="0.8"/>
<text x="308.3" y="645.9" text-anchor="middle" font-size="7.6" fill="#7a7a7a" stroke="#f4f4f4" stroke-width="2.2" paint-order="stroke" stroke-linejoin="round">Bumba</text>
<text x="321.5" y="689.0" text-anchor="middle" font-size="12.2" fill="#707070" stroke="#f4f4f4" stroke-width="2.2" paint-order="stroke" stroke-linejoin="round">Democratic</text>
<text x="321.5" y="689.0" text-anchor="middle" font-size="12.2" fill="#707070" stroke="#707070" stroke-width="0.35">Democratic</text>
<text x="321.5" y="704.2" text-anchor="middle" font-size="12.2" fill="#707070" stroke="#f4f4f4" stroke-width="2.2" paint-order="stroke" stroke-linejoin="round">Republic of</text>
<text x="321.5" y="704.2" text-anchor="middle" font-size="12.2" fill="#707070" stroke="#707070" stroke-width="0.35">Republic of</text>
<text x="321.5" y="719.4" text-anchor="middle" font-size="12.2" fill="#707070" stroke="#f4f4f4" stroke-width="2.2" paint-order="stroke" stroke-linejoin="round">the Congo</text>
<text x="321.5" y="719.4" text-anchor="middle" font-size="12.2" fill="#707070" stroke="#707070" stroke-width="0.35">the Congo</text>
<circle cx="174.2" cy="758.0" r="1.4" fill="#555" stroke="#f4f4f4" stroke-width="0.8"/>
<text x="174.2" y="753.6" text-anchor="middle" font-size="7.6" fill="#7a7a7a" stroke="#f4f4f4" stroke-width="2.2" paint-order="stroke" stroke-linejoin="round">Kinshasa</text>
<circle cx="240.3" cy="771.9" r="1.4" fill="#555" stroke="#f4f4f4" stroke-width="0.8"/>
<text x="240.3" y="767.6" text-anchor="middle" font-size="7.6" fill="#7a7a7a" stroke="#f4f4f4" stroke-width="2.2" paint-order="stroke" stroke-linejoin="round">Kikwit</text>
<circle cx="139.5" cy="786.7" r="1.4" fill="#555" stroke="#f4f4f4" stroke-width="0.8"/>
<text x="139.5" y="782.4" text-anchor="middle" font-size="7.6" fill="#7a7a7a" stroke="#f4f4f4" stroke-width="2.2" paint-order="stroke" stroke-linejoin="round">Matadi</text>
<circle cx="307.0" cy="787.6" r="1.4" fill="#555" stroke="#f4f4f4" stroke-width="0.8"/>
<text x="307.0" y="783.7" text-anchor="middle" font-size="7.6" fill="#7a7a7a" stroke="#f4f4f4" stroke-width="2.2" paint-order="stroke" stroke-linejoin="round">Kananga</text>
<circle cx="135.8" cy="842.2" r="1.4" fill="#555" stroke="#f4f4f4" stroke-width="0.8"/>
<text x="135.8" y="838.8" text-anchor="middle" font-size="7.6" fill="#7a7a7a" stroke="#f4f4f4" stroke-width="2.2" paint-order="stroke" stroke-linejoin="round">Luanda</text>
<circle cx="193.6" cy="856.0" r="1.4" fill="#555" stroke="#f4f4f4" stroke-width="0.8"/>
<text x="193.6" y="864.7" text-anchor="middle" font-size="7.6" fill="#7a7a7a" stroke="#f4f4f4" stroke-width="2.2" paint-order="stroke" stroke-linejoin="round">Malanje</text>
<circle cx="363.9" cy="878.3" r="1.4" fill="#555" stroke="#f4f4f4" stroke-width="0.8"/>
<text x="363.9" y="874.9" text-anchor="middle" font-size="7.6" fill="#7a7a7a" stroke="#f4f4f4" stroke-width="2.2" paint-order="stroke" stroke-linejoin="round">Kolwezi</text>
<text x="402.7" y="892.5" text-anchor="middle" font-size="7.6" fill="#7a7a7a" stroke="#f4f4f4" stroke-width="2.2" paint-order="stroke" stroke-linejoin="round">Lubumbashi</text>
<circle cx="383.7" cy="577.0" r="1.4" fill="#555" stroke="#f4f4f4" stroke-width="0.8"/>
<text x="383.7" y="571.9" text-anchor="middle" font-size="7.6" fill="#7a7a7a" stroke="#f4f4f4" stroke-width="2.2" paint-order="stroke" stroke-linejoin="round">Obo</text>
<circle cx="478.6" cy="586.8" r="1.4" fill="#555" stroke="#f4f4f4" stroke-width="0.8"/>
<text x="478.6" y="595.0" text-anchor="middle" font-size="7.6" fill="#7a7a7a" stroke="#f4f4f4" stroke-width="2.2" paint-order="stroke" stroke-linejoin="round">Juba</text>
<text x="493.4" y="657.5" text-anchor="middle" font-size="9.8" fill="#707070" stroke="#f4f4f4" stroke-width="2.2" paint-order="stroke" stroke-linejoin="round">Uganda</text>
<text x="493.4" y="657.5" text-anchor="middle" font-size="9.8" fill="#707070" stroke="#707070" stroke-width="0.35">Uganda</text>
<circle cx="548.9" cy="667.0" r="1.4" fill="#555" stroke="#f4f4f4" stroke-width="0.8"/>
<text x="548.9" y="675.9" text-anchor="middle" font-size="7.6" fill="#7a7a7a" stroke="#f4f4f4" stroke-width="2.2" paint-order="stroke" stroke-linejoin="round">Eldoret</text>
<circle cx="435.6" cy="674.7" r="1.4" fill="#555" stroke="#f4f4f4" stroke-width="0.8"/>
<text x="435.6" y="683.8" text-anchor="middle" font-size="7.6" fill="#7a7a7a" stroke="#f4f4f4" stroke-width="2.2" paint-order="stroke" stroke-linejoin="round">Butembo</text>
<text x="447.5" y="716.0" text-anchor="middle" font-size="8.8" fill="#7a7a7a" stroke="#f4f4f4" stroke-width="2.2" paint-order="stroke" stroke-linejoin="round">Rwanda</text>
<text x="447.5" y="716.0" text-anchor="middle" font-size="8.8" fill="#7a7a7a" stroke="#7a7a7a" stroke-width="0.35">Rwanda</text>
<text x="447.2" y="747.0" text-anchor="middle" font-size="8.8" fill="#7a7a7a" stroke="#f4f4f4" stroke-width="2.2" paint-order="stroke" stroke-linejoin="round">Burundi</text>
<text x="447.2" y="747.0" text-anchor="middle" font-size="8.8" fill="#7a7a7a" stroke="#7a7a7a" stroke-width="0.35">Burundi</text>
<circle cx="433.2" cy="788.5" r="1.4" fill="#555" stroke="#f4f4f4" stroke-width="0.8"/>
<text x="433.2" y="785.0" text-anchor="middle" font-size="7.6" fill="#7a7a7a" stroke="#f4f4f4" stroke-width="2.2" paint-order="stroke" stroke-linejoin="round">Kalemie</text>
<circle cx="736.0" cy="639.6" r="1.4" fill="#555" stroke="#f4f4f4" stroke-width="0.8"/>
<text x="736.0" y="648.2" text-anchor="middle" font-size="7.6" fill="#7a7a7a" stroke="#f4f4f4" stroke-width="2.2" paint-order="stroke" stroke-linejoin="round">Mogadishu</text>
<text x="596.0" y="672.5" text-anchor="middle" font-size="12.5" fill="#6e6e6e" stroke="#f4f4f4" stroke-width="2.2" paint-order="stroke" stroke-linejoin="round">Kenya</text>
<text x="596.0" y="672.5" text-anchor="middle" font-size="12.5" fill="#6e6e6e" stroke="#6e6e6e" stroke-width="0.35">Kenya</text>
<circle cx="576.2" cy="701.0" r="1.4" fill="#555" stroke="#f4f4f4" stroke-width="0.8"/>
<text x="576.2" y="710.6" text-anchor="middle" font-size="7.6" fill="#7a7a7a" stroke="#f4f4f4" stroke-width="2.2" paint-order="stroke" stroke-linejoin="round">Nairobi</text>
<circle cx="573.5" cy="740.8" r="1.4" fill="#555" stroke="#f4f4f4" stroke-width="0.8"/>
<text x="573.5" y="737.1" text-anchor="middle" font-size="7.6" fill="#7a7a7a" stroke="#f4f4f4" stroke-width="2.2" paint-order="stroke" stroke-linejoin="round">Arusha</text>
<circle cx="629.4" cy="753.0" r="1.4" fill="#555" stroke="#f4f4f4" stroke-width="0.8"/>
<text x="629.4" y="761.6" text-anchor="middle" font-size="7.6" fill="#7a7a7a" stroke="#f4f4f4" stroke-width="2.2" paint-order="stroke" stroke-linejoin="round">Mombasa</text>
<circle cx="622.0" cy="805.0" r="1.4" fill="#555" stroke="#f4f4f4" stroke-width="0.8"/>
<text x="622.0" y="814.4" text-anchor="middle" font-size="7.6" fill="#7a7a7a" stroke="#f4f4f4" stroke-width="2.2" paint-order="stroke" stroke-linejoin="round">Dar es Salaam</text>
<circle cx="924.6" cy="763.6" r="1.4" fill="#555" stroke="#f4f4f4" stroke-width="0.8"/>
<text x="924.6" y="772.2" text-anchor="middle" font-size="7.6" fill="#7a7a7a" stroke="#f4f4f4" stroke-width="2.2" paint-order="stroke" stroke-linejoin="round">Victoria</text>
<text x="864.4" y="800.0" text-anchor="middle" font-size="8.6" fill="#7a7a7a" stroke="#f4f4f4" stroke-width="2.2" paint-order="stroke" stroke-linejoin="round">Seychelles</text>
<circle cx="503.6" cy="724.6" r="1.4" fill="#555" stroke="#f4f4f4" stroke-width="0.8"/>
<text x="503.6" y="733.1" text-anchor="middle" font-size="7.6" fill="#7a7a7a" stroke="#f4f4f4" stroke-width="2.2" paint-order="stroke" stroke-linejoin="round">Mwanza</text>
<circle cx="512.8" cy="844.5" r="1.4" fill="#555" stroke="#f4f4f4" stroke-width="0.8"/>
<text x="512.8" y="853.1" text-anchor="middle" font-size="7.6" fill="#7a7a7a" stroke="#f4f4f4" stroke-width="2.2" paint-order="stroke" stroke-linejoin="round">Mbeya</text>
<circle cx="523.5" cy="893.0" r="1.4" fill="#555" stroke="#f4f4f4" stroke-width="0.8"/>
<text x="523.5" y="888.8" text-anchor="middle" font-size="7.6" fill="#7a7a7a" stroke="#f4f4f4" stroke-width="2.2" paint-order="stroke" stroke-linejoin="round">Mzuzu</text>
<text x="538.0" y="799.5" text-anchor="middle" font-size="12" fill="#777" stroke="#f4f4f4" stroke-width="2.2" paint-order="stroke" stroke-linejoin="round">Tanzania</text>
<text x="538.0" y="799.5" text-anchor="middle" font-size="12" fill="#777" stroke="#777" stroke-width="0.35">Tanzania</text>
<text x="773.0" y="574.0" text-anchor="middle" font-size="12.5" fill="#6e6e6e" stroke="#f4f4f4" stroke-width="2.2" paint-order="stroke" stroke-linejoin="round">Somalia</text>
<text x="773.0" y="574.0" text-anchor="middle" font-size="12.5" fill="#6e6e6e" stroke="#6e6e6e" stroke-width="0.35">Somalia</text>
</g>
<circle cx="61" cy="881.6" r="6.5" fill="#fff" stroke="#7a7a7a" stroke-width="0.9"/>
<path d="M61.6,877.6 A3.6,3.6 0 1 1 61.6,884.8 L57.9,884.9 L58,881.2 A3.6,3.6 0 0 1 61.6,877.6 Z" fill="#6e6e6e"/>
<path d="M61.6,879.6 v3 M60.1,881.1 h3" stroke="#fff" stroke-width="0.9"/>
<circle cx="1051" cy="881" r="8" fill="#e6e8e9"/>
<circle cx="1051" cy="881" r="5.2" fill="#333"/>
<rect x="1050.3" y="880" width="1.5" height="3.6" fill="#ddd"/><rect x="1050.3" y="877.7" width="1.5" height="1.4" fill="#ddd"/>
</svg>
<div style="position:absolute;left:48px;top:896px;width:230px;height:37px;border:1.5px solid #7f8c8c;background:#fff;"></div>
<div style="position:absolute;left:51px;top:903px;font-size:10.6px;color:#333;white-space:nowrap;">LEGEND</div>
<div style="position:absolute;left:59px;top:919.3px;width:8px;height:7.6px;background:linear-gradient(to right,#f4fbf4,#1b8a3a 70%,#157032);"></div>
<div style="position:absolute;left:76px;top:918.8px;font-size:9.3px;color:#333;white-space:nowrap;">Admin 1 boundaries</div>
<div style="position:absolute;left:174px;top:919.3px;width:8px;height:7.6px;background:linear-gradient(to right,#f4fbf4,#1b8a3a 70%,#157032);"></div>
<div style="position:absolute;left:191px;top:918.8px;font-size:9.3px;color:#333;white-space:nowrap;">Admin 2 boundaries</div>
<div class="frame"></div>

</body></html>
